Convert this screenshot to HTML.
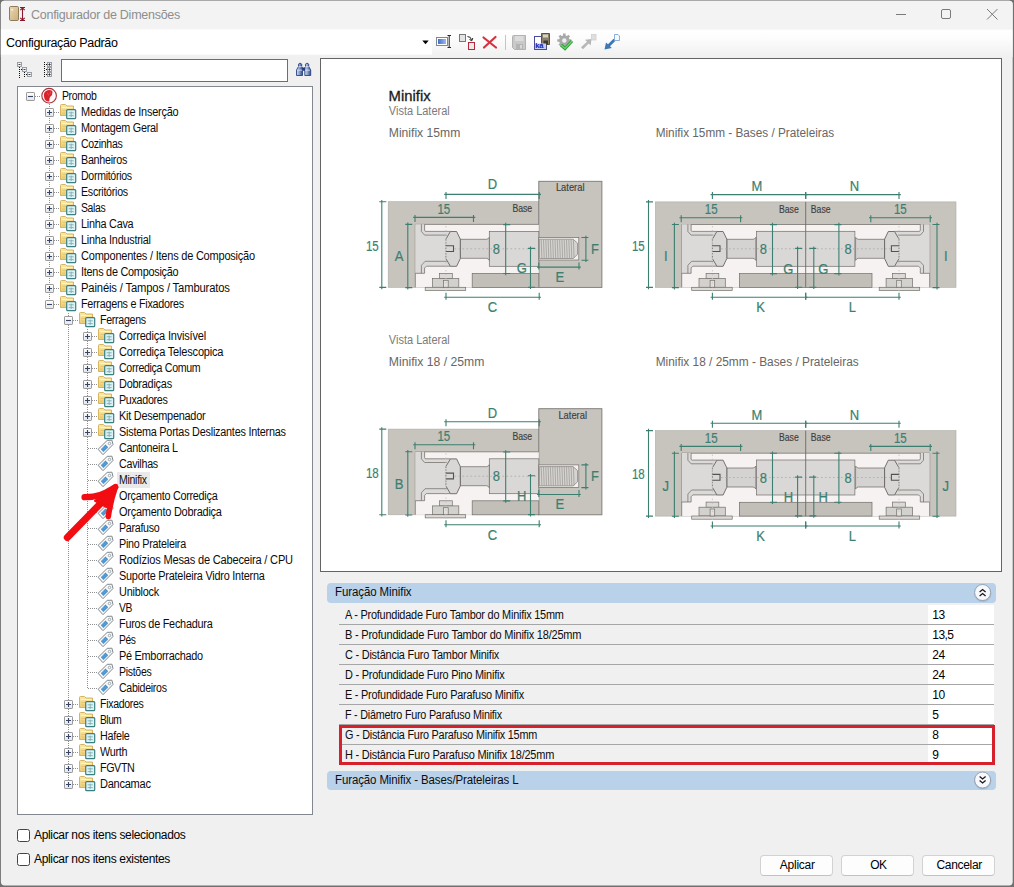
<!DOCTYPE html>
<html lang="pt-BR"><head><meta charset="utf-8"><title>Configurador de Dimensões</title>
<style>
html,body{margin:0;padding:0;}
body{width:1014px;height:887px;overflow:hidden;background:#707070;font-family:"Liberation Sans",sans-serif;position:relative;}
.t{position:absolute;white-space:nowrap;display:block;}
.a{position:absolute;display:block;}
svg{position:absolute;left:0;top:0;overflow:visible;}
svg text{font-family:"Liberation Sans",sans-serif;}
</style></head><body>
<svg width="1014" height="887" viewBox="0 0 1014 887">
<defs><clipPath id="wc"><rect x="0.900" y="0.800" width="1011.800" height="884.600" rx="3.600"/></clipPath>
<linearGradient id="tbg" x1="0" y1="0" x2="0" y2="1"><stop offset="0" stop-color="#ffffff"/><stop offset="0.350" stop-color="#fcfcfc"/><stop offset="1" stop-color="#f0f0f0"/></linearGradient></defs>
<g clip-path="url(#wc)">
<rect x="0" y="0" width="1014" height="887" fill="#f0f0f0"/>
<rect x="0" y="0" width="1014" height="29.600" fill="#f3f3f3"/>
<rect x="0" y="29.600" width="1014" height="27.400" fill="url(#tbg)"/>
<rect x="0" y="29.600" width="432" height="25" fill="#ffffff"/>
</g></svg>
<svg width="1014" height="60" viewBox="0 0 1014 60">
<defs><linearGradient id="door" x1="0" y1="0" x2="1" y2="1"><stop offset="0" stop-color="#ecd9b4"/><stop offset="1" stop-color="#c9ad7e"/></linearGradient></defs>
<rect x="9.5" y="6.5" width="9" height="14" rx="1.2" fill="url(#door)" stroke="#8f7a57" stroke-width="1"/>
<rect x="11.5" y="9" width="1.5" height="1.5" fill="#fff6e0"/>
<g stroke="#8b1a2c" stroke-width="1.1" fill="none"><path d="M20 7.5H25M20 20.5H25M22.5 8V20"/><path d="M20.3 10.2L22.5 8L24.7 10.2M20.3 17.8L22.5 20L24.7 17.8"/></g>
<g stroke="#7a7a7a" stroke-width="1" fill="none">
<path d="M896 14.5H906"/>
<rect x="941.5" y="9.5" width="9" height="9" rx="1.5"/>
<path d="M987 9L997.5 19.5M997.5 9L987 19.5"/>
</g>
</svg>
<span class="t" style="left:31.0px;top:7.0px;line-height:16px;font-size:12.5px;color:#8e8e8e;letter-spacing:-0.266px;">Configurador de Dimensões</span>
<span class="t" style="left:6.0px;top:35.4px;line-height:16px;font-size:12.5px;color:#000;letter-spacing:-0.349px;">Configuração Padrão</span>
<svg width="1014" height="60" viewBox="0 0 1014 60">
<defs>
<linearGradient id="bl" x1="0" y1="0" x2="1" y2="0"><stop offset="0" stop-color="#3f6fd0"/><stop offset="1" stop-color="#9db8ea"/></linearGradient>
</defs>
<path d="M422.3 40.5H428.7L425.5 44.2Z" fill="#000"/>
<!-- rename -->
<rect x="436.5" y="37.5" width="11" height="8" fill="#fff" stroke="#7d8894" stroke-width="1"/>
<rect x="438" y="39" width="8" height="5" fill="url(#bl)"/>
<path d="M447.5 35.5H449.2M451 35.5H449.2V47.5H447.5M449.2 47.5H451" stroke="#222" stroke-width="1" fill="none"/>
<!-- copy/move -->
<rect x="459.5" y="34.5" width="6" height="7" fill="#e4e4e4" stroke="#777" stroke-width="1"/>
<rect x="468.5" y="42.5" width="6" height="7" fill="#f1e6e8" stroke="#b02a3c" stroke-width="1"/>
<path d="M467.5 36.5Q471 36.5 471.5 40M469.5 39.5L471.8 40.8L472.8 38" stroke="#222" stroke-width="1" fill="none"/>
<!-- delete -->
<path d="M483.5 37.5L496 47.5M495.5 37L484 47.5" stroke="#d8303c" stroke-width="2.2" stroke-linecap="round" fill="none"/>
<!-- separator -->
<path d="M505.5 35V50" stroke="#c4c4c4" stroke-width="1"/>
<!-- save (disabled) -->
<path d="M512.5 36.5Q512.5 35.5 513.5 35.5H525.5V49.5H514.5L512.5 47.5Z" fill="#c9c9c9" stroke="#b2b2b2" stroke-width="1"/>
<rect x="515" y="36" width="8.5" height="5" fill="#dcdcdc"/>
<rect x="516" y="44" width="7" height="5" fill="#b4b4b4"/><rect x="520" y="45" width="2" height="3.5" fill="#d8d8d8"/>
<!-- save as -->
<rect x="534.5" y="36.500" width="12" height="13" fill="#fff" stroke="#4a4a9a" stroke-width="1"/>
<path d="M541.5 33.500H549.5V44.5H541.5Z" fill="#8c826a" stroke="#5b543f" stroke-width="1"/>
<rect x="543" y="34.500" width="5" height="3" fill="#d6d2c4"/><rect x="543.5" y="40.5" width="4.5" height="4" fill="#3c3a34"/>
<rect x="535" y="43.500" width="11" height="5.500" fill="#c9cdf0"/>
<!-- gear + check -->
<circle cx="564.3" cy="40.5" r="5.2" fill="#a9a9a9"/>
<g stroke="#a9a9a9" stroke-width="2.6"><path d="M564.3 33.5V47.5M557.3 40.5H571.3M559.400 35.600L569.200 45.400M569.200 35.600L559.400 45.400"/></g>
<circle cx="564.3" cy="40.5" r="2.2" fill="#efefef"/>
<path d="M561 45L565 48.500L572 41" stroke="#2f9e3b" stroke-width="3.2" fill="none" stroke-linejoin="miter"/>
<path d="M561 45L565 48.500L572 41" stroke="#6fd66f" stroke-width="1.2" fill="none"/>
<!-- gray arrow -->
<path d="M591.500 39L585 39.800L587 41.800L581 47.300L583 49.300L588.700 43.600L590.700 45.600Z" fill="#b7b7b7"/>
<rect x="591.5" y="34.500" width="4.5" height="5.500" fill="#dedede" stroke="#cfcfcf" stroke-width="0.8"/>
<!-- blue arrow -->
<path d="M604.5 49.500L606 42.500L608 44.300L613.5 38.800L615.500 40.800L610 46.300L611.8 48Z" fill="#3c78b4"/>
<path d="M614.5 34.500H618L619.500 36V40.500H614.5Z" fill="#f4f8ff" stroke="#7fa6d8" stroke-width="0.9"/>
</svg>
<span class="t" style="left:535.3px;top:42.0px;line-height:8px;font-size:7.5px;color:#1a1aa0;font-weight:bold;letter-spacing:-0.2px;">ka</span>
<div class="a" style="left:61px;top:59px;width:225px;height:21px;background:#fff;border:1px solid #6e6e6e;"></div>
<svg width="330" height="90" viewBox="0 0 330 90">
<g fill="none" stroke="#111" stroke-width="1" stroke-dasharray="1 1"><path d="M19.500 67V78M24.500 72V77M21 69.500H22M26 74.500H27M44.500 62V77M46 64.500H47M46 69.500H47M46 74.500H47"/></g>
<g fill="#f4f4f4" stroke="#8f979f" stroke-width="0.900">
<rect x="17.500" y="62.500" width="4" height="4"/><rect x="22.500" y="67.500" width="4" height="4"/><rect x="27.500" y="72.500" width="4" height="4"/>
<rect x="47.500" y="62.500" width="4" height="4"/><rect x="47.500" y="67.500" width="4" height="4"/><rect x="47.500" y="72.500" width="4" height="4"/></g>
<g stroke="#333" stroke-width="0.900" fill="none"><path d="M18.500 64.500H20.500M23.500 69.500H25.500M28.500 74.500H30.500M48.300 64.500H50.700M49.500 63.300V65.700M48.300 69.500H50.700M49.500 68.300V70.700M48.300 74.500H50.700M49.500 73.300V75.700"/></g>
<!-- binoculars -->
<defs><linearGradient id="bn" x1="0" y1="0" x2="1" y2="0"><stop offset="0" stop-color="#d3dcf0"/><stop offset="0.450" stop-color="#8da3d2"/><stop offset="1" stop-color="#2a478a"/></linearGradient></defs>
<g stroke="#2a447f" stroke-width="0.900" fill="url(#bn)">
<path d="M296.500 75.500V70L298.500 66.500V64.200L299.200 63.400H301L301.700 64.200V66.500L302.500 68V75.500Z"/>
<path d="M304.800 75.500V68L305.500 66.500V64.200L306.200 63.400H308L308.700 64.200V66.500L310.700 70V75.500Z"/>
</g>
<rect x="302.300" y="67.500" width="2.700" height="3.300" fill="#233c78"/>
<path d="M298.500 66.700H301.700M305.500 66.700H308.700M297.300 70.200H302.300M305 70.200H310" stroke="#e6ecf8" stroke-width="0.800" fill="none"/>
</svg>
<div class="a" style="left:17px;top:829.0px;width:11px;height:11px;background:#fff;border:1px solid #444;border-radius:2.5px;"></div>
<div class="a" style="left:17px;top:853.0px;width:11px;height:11px;background:#fff;border:1px solid #444;border-radius:2.5px;"></div>
<span class="t" style="left:34.0px;top:827.0px;line-height:16px;font-size:12px;color:#000;letter-spacing:-0.331px;">Aplicar nos itens selecionados</span>
<span class="t" style="left:34.0px;top:851.0px;line-height:16px;font-size:12px;color:#000;letter-spacing:-0.336px;">Aplicar nos itens existentes</span>
<div class="a" style="left:760px;top:855px;width:71px;height:19px;background:#fdfdfd;border:1px solid #d2d2d2;border-bottom-color:#c2c2c2;border-radius:4px;"></div>
<span class="t" style="left:779.8px;top:857.0px;line-height:16px;font-size:12px;color:#000;letter-spacing:-0.240px;">Aplicar</span>
<div class="a" style="left:841px;top:855px;width:71px;height:19px;background:#fdfdfd;border:1px solid #d2d2d2;border-bottom-color:#c2c2c2;border-radius:4px;"></div>
<span class="t" style="left:870.3px;top:857.0px;line-height:16px;font-size:12px;color:#000;letter-spacing:-0.669px;">OK</span>
<div class="a" style="left:922px;top:855px;width:71px;height:19px;background:#fdfdfd;border:1px solid #d2d2d2;border-bottom-color:#c2c2c2;border-radius:4px;"></div>
<span class="t" style="left:936.5px;top:857.0px;line-height:16px;font-size:12px;color:#000;letter-spacing:-0.316px;">Cancelar</span>
<div class="a" style="left:17px;top:86px;width:294px;height:727px;background:#fff;border:1px solid #828790;"></div>
<svg width="330" height="830" viewBox="0 0 330 830">
<defs>
<linearGradient id="fg" x1="0" y1="0" x2="0" y2="1"><stop offset="0" stop-color="#f8e8ab"/><stop offset="1" stop-color="#ebcd78"/></linearGradient>
<linearGradient id="xg" x1="0" y1="0" x2="0" y2="1"><stop offset="0" stop-color="#ffffff"/><stop offset="1" stop-color="#e6e6e6"/></linearGradient>




</defs>
<path d="M49.500 104V304M68.500 313V785M87.500 329V689" stroke="#8f8f8f" stroke-width="1" stroke-dasharray="1 1" fill="none"/>
<path d="M35 96.5H41" stroke="#8f8f8f" stroke-width="1" stroke-dasharray="1 1" fill="none"/>
<g transform="translate(26 92)"><rect x="0.500" y="0.500" width="8" height="8" rx="0.600" fill="url(#xg)" stroke="#9a9a9a" stroke-width="1"/><path d="M2 4.500H7" stroke="#36466a" stroke-width="1.100"/></g>
<circle cx="49.1" cy="95.7" r="7.3" fill="#fff6f6" stroke="#a8323c" stroke-width="1.1"/>
<path transform="translate(0.0 0.0)" d="M44 96.500Q43.200 91.500 47.500 90.200Q50 89.500 52 90.800Q53 92 52.200 93.500Q52.600 95.500 50.200 96.800Q49.200 98.500 49.300 101.300Q46.500 101.800 44.800 99.500Q44.200 98 44 96.500Z" fill="#d6242e"/>
<path transform="translate(0.0 0.0)" d="M47.500 92.500L48.500 95.500M50.500 91.500L50 94.500" stroke="#ee5560" stroke-width="0.700" fill="none"/>
<path d="M54 112.5H60" stroke="#8f8f8f" stroke-width="1" stroke-dasharray="1 1" fill="none"/>
<g transform="translate(45 108)"><rect x="0.500" y="0.500" width="8" height="8" rx="0.600" fill="url(#xg)" stroke="#9a9a9a" stroke-width="1"/><path d="M2 4.500H7M4.500 2V7" stroke="#36466a" stroke-width="1.100"/></g>
<g transform="translate(60 102)"><path d="M0.500 3.500Q0.500 2.500 1.500 2.500H5.500L7 4H13.500V13.500H0.500Z" fill="url(#fg)" stroke="#d3ae52" stroke-width="0.900"/><path d="M1.500 5.500H12.500" stroke="#fdf3cc" stroke-width="1"/><path d="M2.500 8.500H6M2.500 11H5" stroke="#e2c066" stroke-width="0.800"/><rect x="6.700" y="7.600" width="9" height="9" rx="0.900" fill="#dcf2f6" stroke="#3b7f7e" stroke-width="1.200"/><path d="M8.700 10.800H13.700M8.700 13.600H13.700M11.200 9.600V15" stroke="#7fb0b6" stroke-width="0.900" fill="none"/></g>
<path d="M54 128.5H60" stroke="#8f8f8f" stroke-width="1" stroke-dasharray="1 1" fill="none"/>
<g transform="translate(45 124)"><rect x="0.500" y="0.500" width="8" height="8" rx="0.600" fill="url(#xg)" stroke="#9a9a9a" stroke-width="1"/><path d="M2 4.500H7M4.500 2V7" stroke="#36466a" stroke-width="1.100"/></g>
<g transform="translate(60 118)"><path d="M0.500 3.500Q0.500 2.500 1.500 2.500H5.500L7 4H13.500V13.500H0.500Z" fill="url(#fg)" stroke="#d3ae52" stroke-width="0.900"/><path d="M1.500 5.500H12.500" stroke="#fdf3cc" stroke-width="1"/><path d="M2.500 8.500H6M2.500 11H5" stroke="#e2c066" stroke-width="0.800"/><rect x="6.700" y="7.600" width="9" height="9" rx="0.900" fill="#dcf2f6" stroke="#3b7f7e" stroke-width="1.200"/><path d="M8.700 10.800H13.700M8.700 13.600H13.700M11.200 9.600V15" stroke="#7fb0b6" stroke-width="0.900" fill="none"/></g>
<path d="M54 144.5H60" stroke="#8f8f8f" stroke-width="1" stroke-dasharray="1 1" fill="none"/>
<g transform="translate(45 140)"><rect x="0.500" y="0.500" width="8" height="8" rx="0.600" fill="url(#xg)" stroke="#9a9a9a" stroke-width="1"/><path d="M2 4.500H7M4.500 2V7" stroke="#36466a" stroke-width="1.100"/></g>
<g transform="translate(60 134)"><path d="M0.500 3.500Q0.500 2.500 1.500 2.500H5.500L7 4H13.500V13.500H0.500Z" fill="url(#fg)" stroke="#d3ae52" stroke-width="0.900"/><path d="M1.500 5.500H12.500" stroke="#fdf3cc" stroke-width="1"/><path d="M2.500 8.500H6M2.500 11H5" stroke="#e2c066" stroke-width="0.800"/><rect x="6.700" y="7.600" width="9" height="9" rx="0.900" fill="#dcf2f6" stroke="#3b7f7e" stroke-width="1.200"/><path d="M8.700 10.800H13.700M8.700 13.600H13.700M11.200 9.600V15" stroke="#7fb0b6" stroke-width="0.900" fill="none"/></g>
<path d="M54 160.5H60" stroke="#8f8f8f" stroke-width="1" stroke-dasharray="1 1" fill="none"/>
<g transform="translate(45 156)"><rect x="0.500" y="0.500" width="8" height="8" rx="0.600" fill="url(#xg)" stroke="#9a9a9a" stroke-width="1"/><path d="M2 4.500H7M4.500 2V7" stroke="#36466a" stroke-width="1.100"/></g>
<g transform="translate(60 150)"><path d="M0.500 3.500Q0.500 2.500 1.500 2.500H5.500L7 4H13.500V13.500H0.500Z" fill="url(#fg)" stroke="#d3ae52" stroke-width="0.900"/><path d="M1.500 5.500H12.500" stroke="#fdf3cc" stroke-width="1"/><path d="M2.500 8.500H6M2.500 11H5" stroke="#e2c066" stroke-width="0.800"/><rect x="6.700" y="7.600" width="9" height="9" rx="0.900" fill="#dcf2f6" stroke="#3b7f7e" stroke-width="1.200"/><path d="M8.700 10.800H13.700M8.700 13.600H13.700M11.200 9.600V15" stroke="#7fb0b6" stroke-width="0.900" fill="none"/></g>
<path d="M54 176.5H60" stroke="#8f8f8f" stroke-width="1" stroke-dasharray="1 1" fill="none"/>
<g transform="translate(45 172)"><rect x="0.500" y="0.500" width="8" height="8" rx="0.600" fill="url(#xg)" stroke="#9a9a9a" stroke-width="1"/><path d="M2 4.500H7M4.500 2V7" stroke="#36466a" stroke-width="1.100"/></g>
<g transform="translate(60 166)"><path d="M0.500 3.500Q0.500 2.500 1.500 2.500H5.500L7 4H13.500V13.500H0.500Z" fill="url(#fg)" stroke="#d3ae52" stroke-width="0.900"/><path d="M1.500 5.500H12.500" stroke="#fdf3cc" stroke-width="1"/><path d="M2.500 8.500H6M2.500 11H5" stroke="#e2c066" stroke-width="0.800"/><rect x="6.700" y="7.600" width="9" height="9" rx="0.900" fill="#dcf2f6" stroke="#3b7f7e" stroke-width="1.200"/><path d="M8.700 10.800H13.700M8.700 13.600H13.700M11.200 9.600V15" stroke="#7fb0b6" stroke-width="0.900" fill="none"/></g>
<path d="M54 192.5H60" stroke="#8f8f8f" stroke-width="1" stroke-dasharray="1 1" fill="none"/>
<g transform="translate(45 188)"><rect x="0.500" y="0.500" width="8" height="8" rx="0.600" fill="url(#xg)" stroke="#9a9a9a" stroke-width="1"/><path d="M2 4.500H7M4.500 2V7" stroke="#36466a" stroke-width="1.100"/></g>
<g transform="translate(60 182)"><path d="M0.500 3.500Q0.500 2.500 1.500 2.500H5.500L7 4H13.500V13.500H0.500Z" fill="url(#fg)" stroke="#d3ae52" stroke-width="0.900"/><path d="M1.500 5.500H12.500" stroke="#fdf3cc" stroke-width="1"/><path d="M2.500 8.500H6M2.500 11H5" stroke="#e2c066" stroke-width="0.800"/><rect x="6.700" y="7.600" width="9" height="9" rx="0.900" fill="#dcf2f6" stroke="#3b7f7e" stroke-width="1.200"/><path d="M8.700 10.800H13.700M8.700 13.600H13.700M11.200 9.600V15" stroke="#7fb0b6" stroke-width="0.900" fill="none"/></g>
<path d="M54 208.5H60" stroke="#8f8f8f" stroke-width="1" stroke-dasharray="1 1" fill="none"/>
<g transform="translate(45 204)"><rect x="0.500" y="0.500" width="8" height="8" rx="0.600" fill="url(#xg)" stroke="#9a9a9a" stroke-width="1"/><path d="M2 4.500H7M4.500 2V7" stroke="#36466a" stroke-width="1.100"/></g>
<g transform="translate(60 198)"><path d="M0.500 3.500Q0.500 2.500 1.500 2.500H5.500L7 4H13.500V13.500H0.500Z" fill="url(#fg)" stroke="#d3ae52" stroke-width="0.900"/><path d="M1.500 5.500H12.500" stroke="#fdf3cc" stroke-width="1"/><path d="M2.500 8.500H6M2.500 11H5" stroke="#e2c066" stroke-width="0.800"/><rect x="6.700" y="7.600" width="9" height="9" rx="0.900" fill="#dcf2f6" stroke="#3b7f7e" stroke-width="1.200"/><path d="M8.700 10.800H13.700M8.700 13.600H13.700M11.200 9.600V15" stroke="#7fb0b6" stroke-width="0.900" fill="none"/></g>
<path d="M54 224.5H60" stroke="#8f8f8f" stroke-width="1" stroke-dasharray="1 1" fill="none"/>
<g transform="translate(45 220)"><rect x="0.500" y="0.500" width="8" height="8" rx="0.600" fill="url(#xg)" stroke="#9a9a9a" stroke-width="1"/><path d="M2 4.500H7M4.500 2V7" stroke="#36466a" stroke-width="1.100"/></g>
<g transform="translate(60 214)"><path d="M0.500 3.500Q0.500 2.500 1.500 2.500H5.500L7 4H13.500V13.500H0.500Z" fill="url(#fg)" stroke="#d3ae52" stroke-width="0.900"/><path d="M1.500 5.500H12.500" stroke="#fdf3cc" stroke-width="1"/><path d="M2.500 8.500H6M2.500 11H5" stroke="#e2c066" stroke-width="0.800"/><rect x="6.700" y="7.600" width="9" height="9" rx="0.900" fill="#dcf2f6" stroke="#3b7f7e" stroke-width="1.200"/><path d="M8.700 10.800H13.700M8.700 13.600H13.700M11.200 9.600V15" stroke="#7fb0b6" stroke-width="0.900" fill="none"/></g>
<path d="M54 240.5H60" stroke="#8f8f8f" stroke-width="1" stroke-dasharray="1 1" fill="none"/>
<g transform="translate(45 236)"><rect x="0.500" y="0.500" width="8" height="8" rx="0.600" fill="url(#xg)" stroke="#9a9a9a" stroke-width="1"/><path d="M2 4.500H7M4.500 2V7" stroke="#36466a" stroke-width="1.100"/></g>
<g transform="translate(60 230)"><path d="M0.500 3.500Q0.500 2.500 1.500 2.500H5.500L7 4H13.500V13.500H0.500Z" fill="url(#fg)" stroke="#d3ae52" stroke-width="0.900"/><path d="M1.500 5.500H12.500" stroke="#fdf3cc" stroke-width="1"/><path d="M2.500 8.500H6M2.500 11H5" stroke="#e2c066" stroke-width="0.800"/><rect x="6.700" y="7.600" width="9" height="9" rx="0.900" fill="#dcf2f6" stroke="#3b7f7e" stroke-width="1.200"/><path d="M8.700 10.800H13.700M8.700 13.600H13.700M11.200 9.600V15" stroke="#7fb0b6" stroke-width="0.900" fill="none"/></g>
<path d="M54 256.5H60" stroke="#8f8f8f" stroke-width="1" stroke-dasharray="1 1" fill="none"/>
<g transform="translate(45 252)"><rect x="0.500" y="0.500" width="8" height="8" rx="0.600" fill="url(#xg)" stroke="#9a9a9a" stroke-width="1"/><path d="M2 4.500H7M4.500 2V7" stroke="#36466a" stroke-width="1.100"/></g>
<g transform="translate(60 246)"><path d="M0.500 3.500Q0.500 2.500 1.500 2.500H5.500L7 4H13.500V13.500H0.500Z" fill="url(#fg)" stroke="#d3ae52" stroke-width="0.900"/><path d="M1.500 5.500H12.500" stroke="#fdf3cc" stroke-width="1"/><path d="M2.500 8.500H6M2.500 11H5" stroke="#e2c066" stroke-width="0.800"/><rect x="6.700" y="7.600" width="9" height="9" rx="0.900" fill="#dcf2f6" stroke="#3b7f7e" stroke-width="1.200"/><path d="M8.700 10.800H13.700M8.700 13.600H13.700M11.200 9.600V15" stroke="#7fb0b6" stroke-width="0.900" fill="none"/></g>
<path d="M54 272.5H60" stroke="#8f8f8f" stroke-width="1" stroke-dasharray="1 1" fill="none"/>
<g transform="translate(45 268)"><rect x="0.500" y="0.500" width="8" height="8" rx="0.600" fill="url(#xg)" stroke="#9a9a9a" stroke-width="1"/><path d="M2 4.500H7M4.500 2V7" stroke="#36466a" stroke-width="1.100"/></g>
<g transform="translate(60 262)"><path d="M0.500 3.500Q0.500 2.500 1.500 2.500H5.500L7 4H13.500V13.500H0.500Z" fill="url(#fg)" stroke="#d3ae52" stroke-width="0.900"/><path d="M1.500 5.500H12.500" stroke="#fdf3cc" stroke-width="1"/><path d="M2.500 8.500H6M2.500 11H5" stroke="#e2c066" stroke-width="0.800"/><rect x="6.700" y="7.600" width="9" height="9" rx="0.900" fill="#dcf2f6" stroke="#3b7f7e" stroke-width="1.200"/><path d="M8.700 10.800H13.700M8.700 13.600H13.700M11.200 9.600V15" stroke="#7fb0b6" stroke-width="0.900" fill="none"/></g>
<path d="M54 288.5H60" stroke="#8f8f8f" stroke-width="1" stroke-dasharray="1 1" fill="none"/>
<g transform="translate(45 284)"><rect x="0.500" y="0.500" width="8" height="8" rx="0.600" fill="url(#xg)" stroke="#9a9a9a" stroke-width="1"/><path d="M2 4.500H7M4.500 2V7" stroke="#36466a" stroke-width="1.100"/></g>
<g transform="translate(60 278)"><path d="M0.500 3.500Q0.500 2.500 1.500 2.500H5.500L7 4H13.500V13.500H0.500Z" fill="url(#fg)" stroke="#d3ae52" stroke-width="0.900"/><path d="M1.500 5.500H12.500" stroke="#fdf3cc" stroke-width="1"/><path d="M2.500 8.500H6M2.500 11H5" stroke="#e2c066" stroke-width="0.800"/><rect x="6.700" y="7.600" width="9" height="9" rx="0.900" fill="#dcf2f6" stroke="#3b7f7e" stroke-width="1.200"/><path d="M8.700 10.800H13.700M8.700 13.600H13.700M11.200 9.600V15" stroke="#7fb0b6" stroke-width="0.900" fill="none"/></g>
<path d="M54 304.5H60" stroke="#8f8f8f" stroke-width="1" stroke-dasharray="1 1" fill="none"/>
<g transform="translate(45 300)"><rect x="0.500" y="0.500" width="8" height="8" rx="0.600" fill="url(#xg)" stroke="#9a9a9a" stroke-width="1"/><path d="M2 4.500H7" stroke="#36466a" stroke-width="1.100"/></g>
<g transform="translate(60 294)"><path d="M0.500 3.500Q0.500 2.500 1.500 2.500H5.500L7 4H13.500V13.500H0.500Z" fill="url(#fg)" stroke="#d3ae52" stroke-width="0.900"/><path d="M1.500 5.500H12.500" stroke="#fdf3cc" stroke-width="1"/><path d="M2.500 8.500H6M2.500 11H5" stroke="#e2c066" stroke-width="0.800"/><rect x="6.700" y="7.600" width="9" height="9" rx="0.900" fill="#dcf2f6" stroke="#3b7f7e" stroke-width="1.200"/><path d="M8.700 10.800H13.700M8.700 13.600H13.700M11.200 9.600V15" stroke="#7fb0b6" stroke-width="0.900" fill="none"/></g>
<path d="M73 320.5H79" stroke="#8f8f8f" stroke-width="1" stroke-dasharray="1 1" fill="none"/>
<g transform="translate(64 316)"><rect x="0.500" y="0.500" width="8" height="8" rx="0.600" fill="url(#xg)" stroke="#9a9a9a" stroke-width="1"/><path d="M2 4.500H7" stroke="#36466a" stroke-width="1.100"/></g>
<g transform="translate(79 310)"><path d="M0.500 3.500Q0.500 2.500 1.500 2.500H5.500L7 4H13.500V13.500H0.500Z" fill="url(#fg)" stroke="#d3ae52" stroke-width="0.900"/><path d="M1.500 5.500H12.500" stroke="#fdf3cc" stroke-width="1"/><path d="M2.500 8.500H6M2.500 11H5" stroke="#e2c066" stroke-width="0.800"/><rect x="6.700" y="7.600" width="9" height="9" rx="0.900" fill="#dcf2f6" stroke="#3b7f7e" stroke-width="1.200"/><path d="M8.700 10.800H13.700M8.700 13.600H13.700M11.200 9.600V15" stroke="#7fb0b6" stroke-width="0.900" fill="none"/></g>
<path d="M92 336.5H98" stroke="#8f8f8f" stroke-width="1" stroke-dasharray="1 1" fill="none"/>
<g transform="translate(83 332)"><rect x="0.500" y="0.500" width="8" height="8" rx="0.600" fill="url(#xg)" stroke="#9a9a9a" stroke-width="1"/><path d="M2 4.500H7M4.500 2V7" stroke="#36466a" stroke-width="1.100"/></g>
<g transform="translate(98 326)"><path d="M0.500 3.500Q0.500 2.500 1.500 2.500H5.500L7 4H13.500V13.500H0.500Z" fill="url(#fg)" stroke="#d3ae52" stroke-width="0.900"/><path d="M1.500 5.500H12.500" stroke="#fdf3cc" stroke-width="1"/><path d="M2.500 8.500H6M2.500 11H5" stroke="#e2c066" stroke-width="0.800"/><rect x="6.700" y="7.600" width="9" height="9" rx="0.900" fill="#dcf2f6" stroke="#3b7f7e" stroke-width="1.200"/><path d="M8.700 10.800H13.700M8.700 13.600H13.700M11.200 9.600V15" stroke="#7fb0b6" stroke-width="0.900" fill="none"/></g>
<path d="M92 352.5H98" stroke="#8f8f8f" stroke-width="1" stroke-dasharray="1 1" fill="none"/>
<g transform="translate(83 348)"><rect x="0.500" y="0.500" width="8" height="8" rx="0.600" fill="url(#xg)" stroke="#9a9a9a" stroke-width="1"/><path d="M2 4.500H7M4.500 2V7" stroke="#36466a" stroke-width="1.100"/></g>
<g transform="translate(98 342)"><path d="M0.500 3.500Q0.500 2.500 1.500 2.500H5.500L7 4H13.500V13.500H0.500Z" fill="url(#fg)" stroke="#d3ae52" stroke-width="0.900"/><path d="M1.500 5.500H12.500" stroke="#fdf3cc" stroke-width="1"/><path d="M2.500 8.500H6M2.500 11H5" stroke="#e2c066" stroke-width="0.800"/><rect x="6.700" y="7.600" width="9" height="9" rx="0.900" fill="#dcf2f6" stroke="#3b7f7e" stroke-width="1.200"/><path d="M8.700 10.800H13.700M8.700 13.600H13.700M11.200 9.600V15" stroke="#7fb0b6" stroke-width="0.900" fill="none"/></g>
<path d="M92 368.5H98" stroke="#8f8f8f" stroke-width="1" stroke-dasharray="1 1" fill="none"/>
<g transform="translate(83 364)"><rect x="0.500" y="0.500" width="8" height="8" rx="0.600" fill="url(#xg)" stroke="#9a9a9a" stroke-width="1"/><path d="M2 4.500H7M4.500 2V7" stroke="#36466a" stroke-width="1.100"/></g>
<g transform="translate(98 358)"><path d="M0.500 3.500Q0.500 2.500 1.500 2.500H5.500L7 4H13.500V13.500H0.500Z" fill="url(#fg)" stroke="#d3ae52" stroke-width="0.900"/><path d="M1.500 5.500H12.500" stroke="#fdf3cc" stroke-width="1"/><path d="M2.500 8.500H6M2.500 11H5" stroke="#e2c066" stroke-width="0.800"/><rect x="6.700" y="7.600" width="9" height="9" rx="0.900" fill="#dcf2f6" stroke="#3b7f7e" stroke-width="1.200"/><path d="M8.700 10.800H13.700M8.700 13.600H13.700M11.200 9.600V15" stroke="#7fb0b6" stroke-width="0.900" fill="none"/></g>
<path d="M92 384.5H98" stroke="#8f8f8f" stroke-width="1" stroke-dasharray="1 1" fill="none"/>
<g transform="translate(83 380)"><rect x="0.500" y="0.500" width="8" height="8" rx="0.600" fill="url(#xg)" stroke="#9a9a9a" stroke-width="1"/><path d="M2 4.500H7M4.500 2V7" stroke="#36466a" stroke-width="1.100"/></g>
<g transform="translate(98 374)"><path d="M0.500 3.500Q0.500 2.500 1.500 2.500H5.500L7 4H13.500V13.500H0.500Z" fill="url(#fg)" stroke="#d3ae52" stroke-width="0.900"/><path d="M1.500 5.500H12.500" stroke="#fdf3cc" stroke-width="1"/><path d="M2.500 8.500H6M2.500 11H5" stroke="#e2c066" stroke-width="0.800"/><rect x="6.700" y="7.600" width="9" height="9" rx="0.900" fill="#dcf2f6" stroke="#3b7f7e" stroke-width="1.200"/><path d="M8.700 10.800H13.700M8.700 13.600H13.700M11.200 9.600V15" stroke="#7fb0b6" stroke-width="0.900" fill="none"/></g>
<path d="M92 400.5H98" stroke="#8f8f8f" stroke-width="1" stroke-dasharray="1 1" fill="none"/>
<g transform="translate(83 396)"><rect x="0.500" y="0.500" width="8" height="8" rx="0.600" fill="url(#xg)" stroke="#9a9a9a" stroke-width="1"/><path d="M2 4.500H7M4.500 2V7" stroke="#36466a" stroke-width="1.100"/></g>
<g transform="translate(98 390)"><path d="M0.500 3.500Q0.500 2.500 1.500 2.500H5.500L7 4H13.500V13.500H0.500Z" fill="url(#fg)" stroke="#d3ae52" stroke-width="0.900"/><path d="M1.500 5.500H12.500" stroke="#fdf3cc" stroke-width="1"/><path d="M2.500 8.500H6M2.500 11H5" stroke="#e2c066" stroke-width="0.800"/><rect x="6.700" y="7.600" width="9" height="9" rx="0.900" fill="#dcf2f6" stroke="#3b7f7e" stroke-width="1.200"/><path d="M8.700 10.800H13.700M8.700 13.600H13.700M11.200 9.600V15" stroke="#7fb0b6" stroke-width="0.900" fill="none"/></g>
<path d="M92 416.5H98" stroke="#8f8f8f" stroke-width="1" stroke-dasharray="1 1" fill="none"/>
<g transform="translate(83 412)"><rect x="0.500" y="0.500" width="8" height="8" rx="0.600" fill="url(#xg)" stroke="#9a9a9a" stroke-width="1"/><path d="M2 4.500H7M4.500 2V7" stroke="#36466a" stroke-width="1.100"/></g>
<g transform="translate(98 406)"><path d="M0.500 3.500Q0.500 2.500 1.500 2.500H5.500L7 4H13.500V13.500H0.500Z" fill="url(#fg)" stroke="#d3ae52" stroke-width="0.900"/><path d="M1.500 5.500H12.500" stroke="#fdf3cc" stroke-width="1"/><path d="M2.500 8.500H6M2.500 11H5" stroke="#e2c066" stroke-width="0.800"/><rect x="6.700" y="7.600" width="9" height="9" rx="0.900" fill="#dcf2f6" stroke="#3b7f7e" stroke-width="1.200"/><path d="M8.700 10.800H13.700M8.700 13.600H13.700M11.200 9.600V15" stroke="#7fb0b6" stroke-width="0.900" fill="none"/></g>
<path d="M92 432.5H98" stroke="#8f8f8f" stroke-width="1" stroke-dasharray="1 1" fill="none"/>
<g transform="translate(83 428)"><rect x="0.500" y="0.500" width="8" height="8" rx="0.600" fill="url(#xg)" stroke="#9a9a9a" stroke-width="1"/><path d="M2 4.500H7M4.500 2V7" stroke="#36466a" stroke-width="1.100"/></g>
<g transform="translate(98 422)"><path d="M0.500 3.500Q0.500 2.500 1.500 2.500H5.500L7 4H13.500V13.500H0.500Z" fill="url(#fg)" stroke="#d3ae52" stroke-width="0.900"/><path d="M1.500 5.500H12.500" stroke="#fdf3cc" stroke-width="1"/><path d="M2.500 8.500H6M2.500 11H5" stroke="#e2c066" stroke-width="0.800"/><rect x="6.700" y="7.600" width="9" height="9" rx="0.900" fill="#dcf2f6" stroke="#3b7f7e" stroke-width="1.200"/><path d="M8.700 10.800H13.700M8.700 13.600H13.700M11.200 9.600V15" stroke="#7fb0b6" stroke-width="0.900" fill="none"/></g>
<path d="M88 448.5H97" stroke="#8f8f8f" stroke-width="1" stroke-dasharray="1 1" fill="none"/>
<g transform="translate(105.5 448)"><path d="M-7.400 1.300L1.700 -7.600L6.400 -7.800L7.500 -3.500L-2.500 6.700Z" fill="#f6f8fa" stroke="#808890" stroke-width="1" stroke-linejoin="round"/><rect x="-3.300" y="-1.900" width="6.600" height="3.800" transform="translate(-1 0.300) rotate(-45)" fill="#4b91ca"/><path d="M-1.700 -1.900V1.900M0 -1.900V1.900M1.700 -1.900V1.900" transform="translate(-1 0.300) rotate(-45)" stroke="#7fb3dd" stroke-width="0.500"/><circle cx="4" cy="-4.500" r="1.250" fill="#fff" stroke="#8a9199" stroke-width="0.800"/></g>
<path d="M88 464.5H97" stroke="#8f8f8f" stroke-width="1" stroke-dasharray="1 1" fill="none"/>
<g transform="translate(105.5 464)"><path d="M-7.400 1.300L1.700 -7.600L6.400 -7.800L7.500 -3.500L-2.500 6.700Z" fill="#f6f8fa" stroke="#808890" stroke-width="1" stroke-linejoin="round"/><rect x="-3.300" y="-1.900" width="6.600" height="3.800" transform="translate(-1 0.300) rotate(-45)" fill="#4b91ca"/><path d="M-1.700 -1.900V1.900M0 -1.900V1.900M1.700 -1.900V1.900" transform="translate(-1 0.300) rotate(-45)" stroke="#7fb3dd" stroke-width="0.500"/><circle cx="4" cy="-4.500" r="1.250" fill="#fff" stroke="#8a9199" stroke-width="0.800"/></g>
<path d="M88 480.5H97" stroke="#8f8f8f" stroke-width="1" stroke-dasharray="1 1" fill="none"/>
<g transform="translate(105.5 480)"><path d="M-7.400 1.300L1.700 -7.600L6.400 -7.800L7.500 -3.500L-2.500 6.700Z" fill="#f6f8fa" stroke="#808890" stroke-width="1" stroke-linejoin="round"/><rect x="-3.300" y="-1.900" width="6.600" height="3.800" transform="translate(-1 0.300) rotate(-45)" fill="#4b91ca"/><path d="M-1.700 -1.900V1.900M0 -1.900V1.900M1.700 -1.900V1.900" transform="translate(-1 0.300) rotate(-45)" stroke="#7fb3dd" stroke-width="0.500"/><circle cx="4" cy="-4.500" r="1.250" fill="#fff" stroke="#8a9199" stroke-width="0.800"/></g>
<path d="M88 496.5H97" stroke="#8f8f8f" stroke-width="1" stroke-dasharray="1 1" fill="none"/>
<g transform="translate(105.5 496)"><path d="M-7.400 1.300L1.700 -7.600L6.400 -7.800L7.500 -3.500L-2.500 6.700Z" fill="#f6f8fa" stroke="#808890" stroke-width="1" stroke-linejoin="round"/><rect x="-3.300" y="-1.900" width="6.600" height="3.800" transform="translate(-1 0.300) rotate(-45)" fill="#4b91ca"/><path d="M-1.700 -1.900V1.900M0 -1.900V1.900M1.700 -1.900V1.900" transform="translate(-1 0.300) rotate(-45)" stroke="#7fb3dd" stroke-width="0.500"/><circle cx="4" cy="-4.500" r="1.250" fill="#fff" stroke="#8a9199" stroke-width="0.800"/></g>
<path d="M88 512.5H97" stroke="#8f8f8f" stroke-width="1" stroke-dasharray="1 1" fill="none"/>
<g transform="translate(105.5 512)"><path d="M-7.400 1.300L1.700 -7.600L6.400 -7.800L7.500 -3.500L-2.500 6.700Z" fill="#f6f8fa" stroke="#808890" stroke-width="1" stroke-linejoin="round"/><rect x="-3.300" y="-1.900" width="6.600" height="3.800" transform="translate(-1 0.300) rotate(-45)" fill="#4b91ca"/><path d="M-1.700 -1.900V1.900M0 -1.900V1.900M1.700 -1.900V1.900" transform="translate(-1 0.300) rotate(-45)" stroke="#7fb3dd" stroke-width="0.500"/><circle cx="4" cy="-4.500" r="1.250" fill="#fff" stroke="#8a9199" stroke-width="0.800"/></g>
<path d="M88 528.5H97" stroke="#8f8f8f" stroke-width="1" stroke-dasharray="1 1" fill="none"/>
<g transform="translate(105.5 528)"><path d="M-7.400 1.300L1.700 -7.600L6.400 -7.800L7.500 -3.500L-2.500 6.700Z" fill="#f6f8fa" stroke="#808890" stroke-width="1" stroke-linejoin="round"/><rect x="-3.300" y="-1.900" width="6.600" height="3.800" transform="translate(-1 0.300) rotate(-45)" fill="#4b91ca"/><path d="M-1.700 -1.900V1.900M0 -1.900V1.900M1.700 -1.900V1.900" transform="translate(-1 0.300) rotate(-45)" stroke="#7fb3dd" stroke-width="0.500"/><circle cx="4" cy="-4.500" r="1.250" fill="#fff" stroke="#8a9199" stroke-width="0.800"/></g>
<path d="M88 544.5H97" stroke="#8f8f8f" stroke-width="1" stroke-dasharray="1 1" fill="none"/>
<g transform="translate(105.5 544)"><path d="M-7.400 1.300L1.700 -7.600L6.400 -7.800L7.500 -3.500L-2.500 6.700Z" fill="#f6f8fa" stroke="#808890" stroke-width="1" stroke-linejoin="round"/><rect x="-3.300" y="-1.900" width="6.600" height="3.800" transform="translate(-1 0.300) rotate(-45)" fill="#4b91ca"/><path d="M-1.700 -1.900V1.900M0 -1.900V1.900M1.700 -1.900V1.900" transform="translate(-1 0.300) rotate(-45)" stroke="#7fb3dd" stroke-width="0.500"/><circle cx="4" cy="-4.500" r="1.250" fill="#fff" stroke="#8a9199" stroke-width="0.800"/></g>
<path d="M88 560.5H97" stroke="#8f8f8f" stroke-width="1" stroke-dasharray="1 1" fill="none"/>
<g transform="translate(105.5 560)"><path d="M-7.400 1.300L1.700 -7.600L6.400 -7.800L7.500 -3.500L-2.500 6.700Z" fill="#f6f8fa" stroke="#808890" stroke-width="1" stroke-linejoin="round"/><rect x="-3.300" y="-1.900" width="6.600" height="3.800" transform="translate(-1 0.300) rotate(-45)" fill="#4b91ca"/><path d="M-1.700 -1.900V1.900M0 -1.900V1.900M1.700 -1.900V1.900" transform="translate(-1 0.300) rotate(-45)" stroke="#7fb3dd" stroke-width="0.500"/><circle cx="4" cy="-4.500" r="1.250" fill="#fff" stroke="#8a9199" stroke-width="0.800"/></g>
<path d="M88 576.5H97" stroke="#8f8f8f" stroke-width="1" stroke-dasharray="1 1" fill="none"/>
<g transform="translate(105.5 576)"><path d="M-7.400 1.300L1.700 -7.600L6.400 -7.800L7.500 -3.500L-2.500 6.700Z" fill="#f6f8fa" stroke="#808890" stroke-width="1" stroke-linejoin="round"/><rect x="-3.300" y="-1.900" width="6.600" height="3.800" transform="translate(-1 0.300) rotate(-45)" fill="#4b91ca"/><path d="M-1.700 -1.900V1.900M0 -1.900V1.900M1.700 -1.900V1.900" transform="translate(-1 0.300) rotate(-45)" stroke="#7fb3dd" stroke-width="0.500"/><circle cx="4" cy="-4.500" r="1.250" fill="#fff" stroke="#8a9199" stroke-width="0.800"/></g>
<path d="M88 592.5H97" stroke="#8f8f8f" stroke-width="1" stroke-dasharray="1 1" fill="none"/>
<g transform="translate(105.5 592)"><path d="M-7.400 1.300L1.700 -7.600L6.400 -7.800L7.500 -3.500L-2.500 6.700Z" fill="#f6f8fa" stroke="#808890" stroke-width="1" stroke-linejoin="round"/><rect x="-3.300" y="-1.900" width="6.600" height="3.800" transform="translate(-1 0.300) rotate(-45)" fill="#4b91ca"/><path d="M-1.700 -1.900V1.900M0 -1.900V1.900M1.700 -1.900V1.900" transform="translate(-1 0.300) rotate(-45)" stroke="#7fb3dd" stroke-width="0.500"/><circle cx="4" cy="-4.500" r="1.250" fill="#fff" stroke="#8a9199" stroke-width="0.800"/></g>
<path d="M88 608.5H97" stroke="#8f8f8f" stroke-width="1" stroke-dasharray="1 1" fill="none"/>
<g transform="translate(105.5 608)"><path d="M-7.400 1.300L1.700 -7.600L6.400 -7.800L7.500 -3.500L-2.500 6.700Z" fill="#f6f8fa" stroke="#808890" stroke-width="1" stroke-linejoin="round"/><rect x="-3.300" y="-1.900" width="6.600" height="3.800" transform="translate(-1 0.300) rotate(-45)" fill="#4b91ca"/><path d="M-1.700 -1.900V1.900M0 -1.900V1.900M1.700 -1.900V1.900" transform="translate(-1 0.300) rotate(-45)" stroke="#7fb3dd" stroke-width="0.500"/><circle cx="4" cy="-4.500" r="1.250" fill="#fff" stroke="#8a9199" stroke-width="0.800"/></g>
<path d="M88 624.5H97" stroke="#8f8f8f" stroke-width="1" stroke-dasharray="1 1" fill="none"/>
<g transform="translate(105.5 624)"><path d="M-7.400 1.300L1.700 -7.600L6.400 -7.800L7.500 -3.500L-2.500 6.700Z" fill="#f6f8fa" stroke="#808890" stroke-width="1" stroke-linejoin="round"/><rect x="-3.300" y="-1.900" width="6.600" height="3.800" transform="translate(-1 0.300) rotate(-45)" fill="#4b91ca"/><path d="M-1.700 -1.900V1.900M0 -1.900V1.900M1.700 -1.900V1.900" transform="translate(-1 0.300) rotate(-45)" stroke="#7fb3dd" stroke-width="0.500"/><circle cx="4" cy="-4.500" r="1.250" fill="#fff" stroke="#8a9199" stroke-width="0.800"/></g>
<path d="M88 640.5H97" stroke="#8f8f8f" stroke-width="1" stroke-dasharray="1 1" fill="none"/>
<g transform="translate(105.5 640)"><path d="M-7.400 1.300L1.700 -7.600L6.400 -7.800L7.500 -3.500L-2.500 6.700Z" fill="#f6f8fa" stroke="#808890" stroke-width="1" stroke-linejoin="round"/><rect x="-3.300" y="-1.900" width="6.600" height="3.800" transform="translate(-1 0.300) rotate(-45)" fill="#4b91ca"/><path d="M-1.700 -1.900V1.900M0 -1.900V1.900M1.700 -1.900V1.900" transform="translate(-1 0.300) rotate(-45)" stroke="#7fb3dd" stroke-width="0.500"/><circle cx="4" cy="-4.500" r="1.250" fill="#fff" stroke="#8a9199" stroke-width="0.800"/></g>
<path d="M88 656.5H97" stroke="#8f8f8f" stroke-width="1" stroke-dasharray="1 1" fill="none"/>
<g transform="translate(105.5 656)"><path d="M-7.400 1.300L1.700 -7.600L6.400 -7.800L7.500 -3.500L-2.500 6.700Z" fill="#f6f8fa" stroke="#808890" stroke-width="1" stroke-linejoin="round"/><rect x="-3.300" y="-1.900" width="6.600" height="3.800" transform="translate(-1 0.300) rotate(-45)" fill="#4b91ca"/><path d="M-1.700 -1.900V1.900M0 -1.900V1.900M1.700 -1.900V1.900" transform="translate(-1 0.300) rotate(-45)" stroke="#7fb3dd" stroke-width="0.500"/><circle cx="4" cy="-4.500" r="1.250" fill="#fff" stroke="#8a9199" stroke-width="0.800"/></g>
<path d="M88 672.5H97" stroke="#8f8f8f" stroke-width="1" stroke-dasharray="1 1" fill="none"/>
<g transform="translate(105.5 672)"><path d="M-7.400 1.300L1.700 -7.600L6.400 -7.800L7.500 -3.500L-2.500 6.700Z" fill="#f6f8fa" stroke="#808890" stroke-width="1" stroke-linejoin="round"/><rect x="-3.300" y="-1.900" width="6.600" height="3.800" transform="translate(-1 0.300) rotate(-45)" fill="#4b91ca"/><path d="M-1.700 -1.900V1.900M0 -1.900V1.900M1.700 -1.900V1.900" transform="translate(-1 0.300) rotate(-45)" stroke="#7fb3dd" stroke-width="0.500"/><circle cx="4" cy="-4.500" r="1.250" fill="#fff" stroke="#8a9199" stroke-width="0.800"/></g>
<path d="M88 688.5H97" stroke="#8f8f8f" stroke-width="1" stroke-dasharray="1 1" fill="none"/>
<g transform="translate(105.5 688)"><path d="M-7.400 1.300L1.700 -7.600L6.400 -7.800L7.500 -3.500L-2.500 6.700Z" fill="#f6f8fa" stroke="#808890" stroke-width="1" stroke-linejoin="round"/><rect x="-3.300" y="-1.900" width="6.600" height="3.800" transform="translate(-1 0.300) rotate(-45)" fill="#4b91ca"/><path d="M-1.700 -1.900V1.900M0 -1.900V1.900M1.700 -1.900V1.900" transform="translate(-1 0.300) rotate(-45)" stroke="#7fb3dd" stroke-width="0.500"/><circle cx="4" cy="-4.500" r="1.250" fill="#fff" stroke="#8a9199" stroke-width="0.800"/></g>
<path d="M73 704.5H79" stroke="#8f8f8f" stroke-width="1" stroke-dasharray="1 1" fill="none"/>
<g transform="translate(64 700)"><rect x="0.500" y="0.500" width="8" height="8" rx="0.600" fill="url(#xg)" stroke="#9a9a9a" stroke-width="1"/><path d="M2 4.500H7M4.500 2V7" stroke="#36466a" stroke-width="1.100"/></g>
<g transform="translate(79 694)"><path d="M0.500 3.500Q0.500 2.500 1.500 2.500H5.500L7 4H13.500V13.500H0.500Z" fill="url(#fg)" stroke="#d3ae52" stroke-width="0.900"/><path d="M1.500 5.500H12.500" stroke="#fdf3cc" stroke-width="1"/><path d="M2.500 8.500H6M2.500 11H5" stroke="#e2c066" stroke-width="0.800"/><rect x="6.700" y="7.600" width="9" height="9" rx="0.900" fill="#dcf2f6" stroke="#3b7f7e" stroke-width="1.200"/><path d="M8.700 10.800H13.700M8.700 13.600H13.700M11.200 9.600V15" stroke="#7fb0b6" stroke-width="0.900" fill="none"/></g>
<path d="M73 720.5H79" stroke="#8f8f8f" stroke-width="1" stroke-dasharray="1 1" fill="none"/>
<g transform="translate(64 716)"><rect x="0.500" y="0.500" width="8" height="8" rx="0.600" fill="url(#xg)" stroke="#9a9a9a" stroke-width="1"/><path d="M2 4.500H7M4.500 2V7" stroke="#36466a" stroke-width="1.100"/></g>
<g transform="translate(79 710)"><path d="M0.500 3.500Q0.500 2.500 1.500 2.500H5.500L7 4H13.500V13.500H0.500Z" fill="url(#fg)" stroke="#d3ae52" stroke-width="0.900"/><path d="M1.500 5.500H12.500" stroke="#fdf3cc" stroke-width="1"/><path d="M2.500 8.500H6M2.500 11H5" stroke="#e2c066" stroke-width="0.800"/><rect x="6.700" y="7.600" width="9" height="9" rx="0.900" fill="#dcf2f6" stroke="#3b7f7e" stroke-width="1.200"/><path d="M8.700 10.800H13.700M8.700 13.600H13.700M11.200 9.600V15" stroke="#7fb0b6" stroke-width="0.900" fill="none"/></g>
<path d="M73 736.5H79" stroke="#8f8f8f" stroke-width="1" stroke-dasharray="1 1" fill="none"/>
<g transform="translate(64 732)"><rect x="0.500" y="0.500" width="8" height="8" rx="0.600" fill="url(#xg)" stroke="#9a9a9a" stroke-width="1"/><path d="M2 4.500H7M4.500 2V7" stroke="#36466a" stroke-width="1.100"/></g>
<g transform="translate(79 726)"><path d="M0.500 3.500Q0.500 2.500 1.500 2.500H5.500L7 4H13.500V13.500H0.500Z" fill="url(#fg)" stroke="#d3ae52" stroke-width="0.900"/><path d="M1.500 5.500H12.500" stroke="#fdf3cc" stroke-width="1"/><path d="M2.500 8.500H6M2.500 11H5" stroke="#e2c066" stroke-width="0.800"/><rect x="6.700" y="7.600" width="9" height="9" rx="0.900" fill="#dcf2f6" stroke="#3b7f7e" stroke-width="1.200"/><path d="M8.700 10.800H13.700M8.700 13.600H13.700M11.200 9.600V15" stroke="#7fb0b6" stroke-width="0.900" fill="none"/></g>
<path d="M73 752.5H79" stroke="#8f8f8f" stroke-width="1" stroke-dasharray="1 1" fill="none"/>
<g transform="translate(64 748)"><rect x="0.500" y="0.500" width="8" height="8" rx="0.600" fill="url(#xg)" stroke="#9a9a9a" stroke-width="1"/><path d="M2 4.500H7M4.500 2V7" stroke="#36466a" stroke-width="1.100"/></g>
<g transform="translate(79 742)"><path d="M0.500 3.500Q0.500 2.500 1.500 2.500H5.500L7 4H13.500V13.500H0.500Z" fill="url(#fg)" stroke="#d3ae52" stroke-width="0.900"/><path d="M1.500 5.500H12.500" stroke="#fdf3cc" stroke-width="1"/><path d="M2.500 8.500H6M2.500 11H5" stroke="#e2c066" stroke-width="0.800"/><rect x="6.700" y="7.600" width="9" height="9" rx="0.900" fill="#dcf2f6" stroke="#3b7f7e" stroke-width="1.200"/><path d="M8.700 10.800H13.700M8.700 13.600H13.700M11.200 9.600V15" stroke="#7fb0b6" stroke-width="0.900" fill="none"/></g>
<path d="M73 768.5H79" stroke="#8f8f8f" stroke-width="1" stroke-dasharray="1 1" fill="none"/>
<g transform="translate(64 764)"><rect x="0.500" y="0.500" width="8" height="8" rx="0.600" fill="url(#xg)" stroke="#9a9a9a" stroke-width="1"/><path d="M2 4.500H7M4.500 2V7" stroke="#36466a" stroke-width="1.100"/></g>
<g transform="translate(79 758)"><path d="M0.500 3.500Q0.500 2.500 1.500 2.500H5.500L7 4H13.500V13.500H0.500Z" fill="url(#fg)" stroke="#d3ae52" stroke-width="0.900"/><path d="M1.500 5.500H12.500" stroke="#fdf3cc" stroke-width="1"/><path d="M2.500 8.500H6M2.500 11H5" stroke="#e2c066" stroke-width="0.800"/><rect x="6.700" y="7.600" width="9" height="9" rx="0.900" fill="#dcf2f6" stroke="#3b7f7e" stroke-width="1.200"/><path d="M8.700 10.800H13.700M8.700 13.600H13.700M11.200 9.600V15" stroke="#7fb0b6" stroke-width="0.900" fill="none"/></g>
<path d="M73 784.5H79" stroke="#8f8f8f" stroke-width="1" stroke-dasharray="1 1" fill="none"/>
<g transform="translate(64 780)"><rect x="0.500" y="0.500" width="8" height="8" rx="0.600" fill="url(#xg)" stroke="#9a9a9a" stroke-width="1"/><path d="M2 4.500H7M4.500 2V7" stroke="#36466a" stroke-width="1.100"/></g>
<g transform="translate(79 774)"><path d="M0.500 3.500Q0.500 2.500 1.500 2.500H5.500L7 4H13.500V13.500H0.500Z" fill="url(#fg)" stroke="#d3ae52" stroke-width="0.900"/><path d="M1.500 5.500H12.500" stroke="#fdf3cc" stroke-width="1"/><path d="M2.500 8.500H6M2.500 11H5" stroke="#e2c066" stroke-width="0.800"/><rect x="6.700" y="7.600" width="9" height="9" rx="0.900" fill="#dcf2f6" stroke="#3b7f7e" stroke-width="1.200"/><path d="M8.700 10.800H13.700M8.700 13.600H13.700M11.200 9.600V15" stroke="#7fb0b6" stroke-width="0.900" fill="none"/></g>
</svg>
<div class="a" style="left:117px;top:472px;width:33px;height:16px;background:#e9e9e9;"></div>
<span class="t" style="left:62.3px;top:87.7px;line-height:16px;font-size:12px;color:#0c0c0c;letter-spacing:-0.436px;transform:scaleX(0.8731);transform-origin:0 50%;">Promob</span>
<span class="t" style="left:81.3px;top:103.7px;line-height:16px;font-size:12px;color:#0c0c0c;letter-spacing:-0.242px;transform:scaleX(0.9120);transform-origin:0 50%;">Medidas de Inserção</span>
<span class="t" style="left:81.3px;top:119.7px;line-height:16px;font-size:12px;color:#0c0c0c;letter-spacing:-0.296px;transform:scaleX(0.9023);transform-origin:0 50%;">Montagem Geral</span>
<span class="t" style="left:81.3px;top:135.7px;line-height:16px;font-size:12px;color:#0c0c0c;letter-spacing:-0.368px;transform:scaleX(0.8793);transform-origin:0 50%;">Cozinhas</span>
<span class="t" style="left:81.3px;top:151.7px;line-height:16px;font-size:12px;color:#0c0c0c;letter-spacing:-0.299px;transform:scaleX(0.8959);transform-origin:0 50%;">Banheiros</span>
<span class="t" style="left:81.3px;top:167.7px;line-height:16px;font-size:12px;color:#0c0c0c;letter-spacing:-0.327px;transform:scaleX(0.8797);transform-origin:0 50%;">Dormitórios</span>
<span class="t" style="left:81.3px;top:183.7px;line-height:16px;font-size:12px;color:#0c0c0c;letter-spacing:-0.280px;transform:scaleX(0.8861);transform-origin:0 50%;">Escritórios</span>
<span class="t" style="left:81.3px;top:199.7px;line-height:16px;font-size:12px;color:#0c0c0c;letter-spacing:-0.388px;transform:scaleX(0.8690);transform-origin:0 50%;">Salas</span>
<span class="t" style="left:81.3px;top:215.7px;line-height:16px;font-size:12px;color:#0c0c0c;letter-spacing:-0.276px;transform:scaleX(0.9042);transform-origin:0 50%;">Linha Cava</span>
<span class="t" style="left:81.3px;top:231.7px;line-height:16px;font-size:12px;color:#0c0c0c;letter-spacing:-0.244px;transform:scaleX(0.8995);transform-origin:0 50%;">Linha Industrial</span>
<span class="t" style="left:81.3px;top:247.7px;line-height:16px;font-size:12px;color:#0c0c0c;letter-spacing:-0.234px;transform:scaleX(0.9165);transform-origin:0 50%;">Componentes / Itens de Composição</span>
<span class="t" style="left:81.3px;top:263.7px;line-height:16px;font-size:12px;color:#0c0c0c;letter-spacing:-0.268px;transform:scaleX(0.9048);transform-origin:0 50%;">Itens de Composição</span>
<span class="t" style="left:81.3px;top:279.7px;line-height:16px;font-size:12px;color:#0c0c0c;letter-spacing:-0.164px;transform:scaleX(0.9365);transform-origin:0 50%;">Painéis / Tampos / Tamburatos</span>
<span class="t" style="left:81.3px;top:295.7px;line-height:16px;font-size:12px;color:#0c0c0c;letter-spacing:-0.284px;transform:scaleX(0.8966);transform-origin:0 50%;">Ferragens e Fixadores</span>
<span class="t" style="left:100.3px;top:311.7px;line-height:16px;font-size:12px;color:#0c0c0c;letter-spacing:-0.335px;transform:scaleX(0.8862);transform-origin:0 50%;">Ferragens</span>
<span class="t" style="left:119.3px;top:327.7px;line-height:16px;font-size:12px;color:#0c0c0c;letter-spacing:-0.202px;transform:scaleX(0.9170);transform-origin:0 50%;">Corrediça Invisível</span>
<span class="t" style="left:119.3px;top:343.7px;line-height:16px;font-size:12px;color:#0c0c0c;letter-spacing:-0.210px;transform:scaleX(0.9196);transform-origin:0 50%;">Corrediça Telescopica</span>
<span class="t" style="left:119.3px;top:359.7px;line-height:16px;font-size:12px;color:#0c0c0c;letter-spacing:-0.361px;transform:scaleX(0.8852);transform-origin:0 50%;">Corrediça Comum</span>
<span class="t" style="left:119.3px;top:375.7px;line-height:16px;font-size:12px;color:#0c0c0c;letter-spacing:-0.257px;transform:scaleX(0.9101);transform-origin:0 50%;">Dobradiças</span>
<span class="t" style="left:119.3px;top:391.7px;line-height:16px;font-size:12px;color:#0c0c0c;letter-spacing:-0.327px;transform:scaleX(0.8930);transform-origin:0 50%;">Puxadores</span>
<span class="t" style="left:119.3px;top:407.7px;line-height:16px;font-size:12px;color:#0c0c0c;letter-spacing:-0.268px;transform:scaleX(0.9085);transform-origin:0 50%;">Kit Desempenador</span>
<span class="t" style="left:119.3px;top:423.7px;line-height:16px;font-size:12px;color:#0c0c0c;letter-spacing:-0.253px;transform:scaleX(0.9037);transform-origin:0 50%;">Sistema Portas Deslizantes Internas</span>
<span class="t" style="left:119.3px;top:439.7px;line-height:16px;font-size:12px;color:#0c0c0c;letter-spacing:-0.279px;transform:scaleX(0.8980);transform-origin:0 50%;">Cantoneira L</span>
<span class="t" style="left:119.3px;top:455.7px;line-height:16px;font-size:12px;color:#0c0c0c;letter-spacing:-0.299px;transform:scaleX(0.8917);transform-origin:0 50%;">Cavilhas</span>
<span class="t" style="left:119.3px;top:471.7px;line-height:16px;font-size:12px;color:#0c0c0c;letter-spacing:-0.305px;transform:scaleX(0.8723);transform-origin:0 50%;">Minifix</span>
<span class="t" style="left:119.3px;top:487.7px;line-height:16px;font-size:12px;color:#0c0c0c;letter-spacing:-0.286px;transform:scaleX(0.9005);transform-origin:0 50%;">Orçamento Corrediça</span>
<span class="t" style="left:119.3px;top:503.7px;line-height:16px;font-size:12px;color:#0c0c0c;letter-spacing:-0.254px;transform:scaleX(0.9124);transform-origin:0 50%;">Orçamento Dobradiça</span>
<span class="t" style="left:119.3px;top:519.7px;line-height:16px;font-size:12px;color:#0c0c0c;letter-spacing:-0.322px;transform:scaleX(0.8888);transform-origin:0 50%;">Parafuso</span>
<span class="t" style="left:119.3px;top:535.7px;line-height:16px;font-size:12px;color:#0c0c0c;letter-spacing:-0.264px;transform:scaleX(0.8949);transform-origin:0 50%;">Pino Prateleira</span>
<span class="t" style="left:119.3px;top:551.7px;line-height:16px;font-size:12px;color:#0c0c0c;letter-spacing:-0.212px;transform:scaleX(0.9229);transform-origin:0 50%;">Rodízios Mesas de Cabeceira / CPU</span>
<span class="t" style="left:119.3px;top:567.7px;line-height:16px;font-size:12px;color:#0c0c0c;letter-spacing:-0.238px;transform:scaleX(0.9047);transform-origin:0 50%;">Suporte Prateleira Vidro Interna</span>
<span class="t" style="left:119.3px;top:583.7px;line-height:16px;font-size:12px;color:#0c0c0c;letter-spacing:-0.253px;transform:scaleX(0.9069);transform-origin:0 50%;">Uniblock</span>
<span class="t" style="left:119.3px;top:599.7px;line-height:16px;font-size:12px;color:#0c0c0c;letter-spacing:-0.560px;transform:scaleX(0.8597);transform-origin:0 50%;">VB</span>
<span class="t" style="left:119.3px;top:615.7px;line-height:16px;font-size:12px;color:#0c0c0c;letter-spacing:-0.268px;transform:scaleX(0.9057);transform-origin:0 50%;">Furos de Fechadura</span>
<span class="t" style="left:119.3px;top:631.7px;line-height:16px;font-size:12px;color:#0c0c0c;letter-spacing:-0.500px;transform:scaleX(0.8552);transform-origin:0 50%;">Pés</span>
<span class="t" style="left:119.3px;top:647.7px;line-height:16px;font-size:12px;color:#0c0c0c;letter-spacing:-0.285px;transform:scaleX(0.9065);transform-origin:0 50%;">Pé Emborrachado</span>
<span class="t" style="left:119.3px;top:663.7px;line-height:16px;font-size:12px;color:#0c0c0c;letter-spacing:-0.340px;transform:scaleX(0.8763);transform-origin:0 50%;">Pistões</span>
<span class="t" style="left:119.3px;top:679.7px;line-height:16px;font-size:12px;color:#0c0c0c;letter-spacing:-0.329px;transform:scaleX(0.8821);transform-origin:0 50%;">Cabideiros</span>
<span class="t" style="left:100.3px;top:695.7px;line-height:16px;font-size:12px;color:#0c0c0c;letter-spacing:-0.345px;transform:scaleX(0.8792);transform-origin:0 50%;">Fixadores</span>
<span class="t" style="left:100.3px;top:711.7px;line-height:16px;font-size:12px;color:#0c0c0c;letter-spacing:-0.526px;transform:scaleX(0.8479);transform-origin:0 50%;">Blum</span>
<span class="t" style="left:100.3px;top:727.7px;line-height:16px;font-size:12px;color:#0c0c0c;letter-spacing:-0.284px;transform:scaleX(0.8973);transform-origin:0 50%;">Hafele</span>
<span class="t" style="left:100.3px;top:743.7px;line-height:16px;font-size:12px;color:#0c0c0c;letter-spacing:-0.299px;transform:scaleX(0.9012);transform-origin:0 50%;">Wurth</span>
<span class="t" style="left:100.3px;top:759.7px;line-height:16px;font-size:12px;color:#0c0c0c;letter-spacing:-0.421px;transform:scaleX(0.8922);transform-origin:0 50%;">FGVTN</span>
<span class="t" style="left:100.3px;top:775.7px;line-height:16px;font-size:12px;color:#0c0c0c;letter-spacing:-0.272px;transform:scaleX(0.9187);transform-origin:0 50%;">Dancamac</span>
<svg width="330" height="830" viewBox="0 0 330 830">
<g fill="none" stroke="#f20d12" stroke-linecap="round" stroke-linejoin="round">
<path d="M67.300 537.500L103 501" stroke-width="7"/>
<path d="M84.500 497.200Q101 497.500 115.300 487" stroke-width="6.200"/>
<path d="M115.300 487.300Q110.500 501 108.300 516.600" stroke-width="5.600"/>
<path d="M116.800 485.200L95 500.800L106.500 507Z" fill="#f20d12" stroke-width="2"/>
</g></svg>
<div class="a" style="left:320px;top:58px;width:680px;height:512px;background:#fff;border:1px solid #646464;"></div>
<svg width="1014" height="887" viewBox="0 0 1014 887">
<rect x="388.2" y="201.7" width="150.6" height="85.7" fill="#c7c3bd" stroke="#aeaba6" stroke-width="0.6"/>
<rect x="538.8" y="181.3" width="63.1" height="106.1" fill="#c7c3bd" stroke="#7b7874" stroke-width="0.9"/>
<rect x="415.3" y="224.4" width="123.5" height="63" fill="#f5f2f1"/>
<path d="M415.3 287.4V224.4H538.8" fill="none" stroke="#716e6a" stroke-width="0.75"/>
<rect x="472.2" y="273.4" width="66.6" height="14" fill="#c2beb8" stroke="#716e6a" stroke-width="0.7"/>
<rect x="489.3" y="231.4" width="49.5" height="34.9" fill="#dad8d6" stroke="#716e6a" stroke-width="0.7"/>
<path d="M415.3 224.3H424.6V230.3Q424.6 231.4 426.0 231.4H450.4V266.2H426.4L424.6 268V273.3H415.3Z" fill="#dcdad8"/>
<path d="M424.6 224.3V230.3Q424.6 231.4 426.0 231.4H450.4M421.4 224.3V231.5L424.6 235.1H446.8M446.8 261.3H425.1L421.4 265.3V273.3M450.4 266.2H426.4L424.6 268V273.3M415.3 273.3H424.6" fill="none" stroke="#716e6a" stroke-width="0.75"/>
<path d="M460.3 239.3H486.5Q488.3 239.3 489.3 237.3V260.4Q488.3 258.3 486.5 258.3H460.3Z" fill="#d5d3d1" stroke="#716e6a" stroke-width="0.75"/>
<path d="M445.9 239.1L450.4 231.5H456.6L460.3 239.1V258.6L456.6 266.3H450.4L445.9 258.6Z" fill="#d9d7d5"/>
<path d="M445.9 239.1L450.4 231.5H456.6L460.3 239.1V258.6L456.6 266.3H450.4L445.9 258.6" fill="none" stroke="#5f5c58" stroke-width="0.85"/>
<path d="M445.9 239.1V258.6" stroke="#6a6763" stroke-width="0.8" stroke-dasharray="1.6 1.2" fill="none"/>
<path d="M445.9 245.7H453.5V251.5H445.9" stroke="#55524e" stroke-width="1.1" fill="none"/>
<rect x="439.6" y="273.4" width="12.7" height="5.2" fill="#dcdad8" stroke="#716e6a" stroke-width="0.7"/>
<rect x="432.5" y="278.5" width="26.3" height="8.8" fill="#d3d1ce" stroke="#716e6a" stroke-width="0.7"/>
<rect x="425.2" y="287.3" width="40.5" height="3.2" fill="#dddbd8" stroke="#716e6a" stroke-width="0.7"/>
<rect x="443.6" y="280.3" width="4.6" height="7" fill="#e3e1de" stroke="#716e6a" stroke-width="0.7"/>
<path d="M445.9 226V293" stroke="#c4c2be" stroke-width="0.9" stroke-dasharray="1.4 2.6" fill="none"/>
<path d="M454.5 248.8H538" stroke="#b3b1ad" stroke-width="1" stroke-dasharray="1.6 2.4" fill="none"/>
<rect x="538.8" y="237.5" width="40" height="22.5" fill="#f3f1ef" stroke="#716e6a" stroke-width="0.7"/>
<path d="M539.4 239.2H573.1L577.5 243.1V254.4L573.1 258.5H539.4Z" fill="#d6d4d1" stroke="#7f7c78" stroke-width="0.7"/>
<path d="M541.20 239.5L541.90 258.2M543.50 239.5L544.20 258.2M545.80 239.5L546.50 258.2M548.10 239.5L548.80 258.2M550.40 239.5L551.10 258.2M552.70 239.5L553.40 258.2M555.00 239.5L555.70 258.2M557.30 239.5L558.00 258.2M559.60 239.5L560.30 258.2M561.90 239.5L562.60 258.2M564.20 239.5L564.90 258.2M566.50 239.5L567.20 258.2M568.80 239.5L569.50 258.2M571.10 239.5L571.80 258.2M573.40 239.5L574.10 258.2" stroke="#98958f" stroke-width="0.7" fill="none"/>
<path d="M381.8 199.9V289.2M379.3 201.7H386.3M379.3 287.4H386.3" stroke="#3c7f70" stroke-width="1.1" fill="none"/>
<path d="M407.8 222.6V289.4M405.3 224.4H412.3M405.3 287.6H412.3" stroke="#3c7f70" stroke-width="1.1" fill="none"/>
<path d="M413.2 217.4H475.3M415.0 214.9V221.9M473.5 214.9V221.9" stroke="#3c7f70" stroke-width="1.1" fill="none"/>
<path d="M444.2 194.4H541.0M446.0 191.9V198.9M539.2 191.9V198.9" stroke="#3c7f70" stroke-width="1.1" fill="none"/>
<path d="M444.2 297.3H541.0M446.0 292.8V299.8M539.2 292.8V299.8" stroke="#3c7f70" stroke-width="1.1" fill="none"/>
<path d="M505.7 222.8V275.3M503.2 224.6H510.2M503.2 273.5H510.2" stroke="#3c7f70" stroke-width="1.1" fill="none"/>
<path d="M530.5 246.6V289.0M528.0 248.4H535.0M528.0 287.2H535.0" stroke="#3c7f70" stroke-width="1.1" fill="none"/>
<path d="M585.9 235.7V262.0M581.4 237.5H588.4M581.4 260.2H588.4" stroke="#3c7f70" stroke-width="1.1" fill="none"/>
<path d="M537.0 267.1H580.8M538.8 262.6V269.6M579.0 262.6V269.6" stroke="#3c7f70" stroke-width="1.1" fill="none"/>
<text x="492.5" y="189.2" font-size="14" fill="#3c7f70" text-anchor="middle" textLength="9.4" lengthAdjust="spacingAndGlyphs" stroke="#3c7f70" stroke-width="0.2">D</text>
<text x="492.5" y="312.2" font-size="14" fill="#3c7f70" text-anchor="middle" textLength="9.4" lengthAdjust="spacingAndGlyphs" stroke="#3c7f70" stroke-width="0.2">C</text>
<text x="443.8" y="213.7" font-size="14" fill="#3c7f70" text-anchor="middle" textLength="12.8" lengthAdjust="spacingAndGlyphs" stroke="#3c7f70" stroke-width="0.2">15</text>
<text x="372.3" y="250.5" font-size="14" fill="#3c7f70" text-anchor="middle" textLength="12.8" lengthAdjust="spacingAndGlyphs" stroke="#3c7f70" stroke-width="0.2">15</text>
<text x="399.0" y="261.4" font-size="14" fill="#3c7f70" text-anchor="middle" textLength="8.7" lengthAdjust="spacingAndGlyphs" stroke="#3c7f70" stroke-width="0.2">A</text>
<text x="496.4" y="253.9" font-size="14" fill="#3c7f70" text-anchor="middle" textLength="7.2" lengthAdjust="spacingAndGlyphs" stroke="#3c7f70" stroke-width="0.2">8</text>
<text x="521.8" y="273.3" font-size="14" fill="#3c7f70" text-anchor="middle" textLength="10.1" lengthAdjust="spacingAndGlyphs" stroke="#3c7f70" stroke-width="0.2">G</text>
<text x="559.9" y="281.6" font-size="14" fill="#3c7f70" text-anchor="middle" textLength="8.7" lengthAdjust="spacingAndGlyphs" stroke="#3c7f70" stroke-width="0.2">E</text>
<text x="595.0" y="253.9" font-size="14" fill="#3c7f70" text-anchor="middle" textLength="7.9" lengthAdjust="spacingAndGlyphs" stroke="#3c7f70" stroke-width="0.2">F</text>
<text x="522.3" y="212.3" font-size="10.3" fill="#40403e" text-anchor="middle" textLength="19.8" lengthAdjust="spacingAndGlyphs" stroke="#40403e" stroke-width="0.15">Base</text>
<text x="570.2" y="191.1" font-size="10.3" fill="#40403e" text-anchor="middle" textLength="28.6" lengthAdjust="spacingAndGlyphs" stroke="#40403e" stroke-width="0.15">Lateral</text>
<rect x="655.4" y="201.9" width="300.6" height="85.5" fill="#c7c3bd" stroke="#aeaba6" stroke-width="0.6"/>
<rect x="681.7" y="224.5" width="248" height="62.9" fill="#f5f2f1"/>
<path d="M681.7 287.4V224.5H929.7V287.4" fill="none" stroke="#716e6a" stroke-width="0.75"/>
<rect x="739.4" y="273.6" width="132.6" height="13.8" fill="#c2beb8" stroke="#716e6a" stroke-width="0.7"/>
<rect x="756.5" y="231.3" width="98.4" height="35" fill="#dad8d6" stroke="#716e6a" stroke-width="0.7"/>
<path d="M681.8 224.3H691.1V230.3Q691.1 231.4 692.5 231.4H716.9V266.2H692.9L691.1 268V273.3H681.8Z" fill="#dcdad8"/>
<path d="M691.1 224.3V230.3Q691.1 231.4 692.5 231.4H716.9M687.9 224.3V231.5L691.1 235.1H713.3M713.3 261.3H691.6L687.9 265.3V273.3M716.9 266.2H692.9L691.1 268V273.3M681.8 273.3H691.1" fill="none" stroke="#716e6a" stroke-width="0.75"/>
<path d="M726.8 239.3H753.0Q754.8 239.3 755.8 237.3V260.4Q754.8 258.3 753.0 258.3H726.8Z" fill="#d5d3d1" stroke="#716e6a" stroke-width="0.75"/>
<path d="M712.4 239.1L716.9 231.5H723.1L726.8 239.1V258.6L723.1 266.3H716.9L712.4 258.6Z" fill="#d9d7d5"/>
<path d="M712.4 239.1L716.9 231.5H723.1L726.8 239.1V258.6L723.1 266.3H716.9L712.4 258.6" fill="none" stroke="#5f5c58" stroke-width="0.85"/>
<path d="M712.4 239.1V258.6" stroke="#6a6763" stroke-width="0.8" stroke-dasharray="1.6 1.2" fill="none"/>
<path d="M712.4 245.7H720.0V251.5H712.4" stroke="#55524e" stroke-width="1.1" fill="none"/>
<rect x="706.1" y="273.4" width="12.7" height="5.2" fill="#dcdad8" stroke="#716e6a" stroke-width="0.7"/>
<rect x="699.0" y="278.5" width="26.3" height="8.8" fill="#d3d1ce" stroke="#716e6a" stroke-width="0.7"/>
<rect x="691.7" y="287.3" width="40.5" height="3.2" fill="#dddbd8" stroke="#716e6a" stroke-width="0.7"/>
<rect x="710.1" y="280.3" width="4.6" height="7" fill="#e3e1de" stroke="#716e6a" stroke-width="0.7"/>
<path d="M712.4 226V293" stroke="#c4c2be" stroke-width="0.9" stroke-dasharray="1.4 2.6" fill="none"/>
<g transform="translate(1611.4 0) scale(-1 1)"><path d="M681.8 224.3H691.1V230.3Q691.1 231.4 692.5 231.4H716.9V266.2H692.9L691.1 268V273.3H681.8Z" fill="#dcdad8"/>
<path d="M691.1 224.3V230.3Q691.1 231.4 692.5 231.4H716.9M687.9 224.3V231.5L691.1 235.1H713.3M713.3 261.3H691.6L687.9 265.3V273.3M716.9 266.2H692.9L691.1 268V273.3M681.8 273.3H691.1" fill="none" stroke="#716e6a" stroke-width="0.75"/>
<path d="M726.8 239.3H753.0Q754.8 239.3 755.8 237.3V260.4Q754.8 258.3 753.0 258.3H726.8Z" fill="#d5d3d1" stroke="#716e6a" stroke-width="0.75"/>
<path d="M712.4 239.1L716.9 231.5H723.1L726.8 239.1V258.6L723.1 266.3H716.9L712.4 258.6Z" fill="#d9d7d5"/>
<path d="M712.4 239.1L716.9 231.5H723.1L726.8 239.1V258.6L723.1 266.3H716.9L712.4 258.6" fill="none" stroke="#5f5c58" stroke-width="0.85"/>
<path d="M712.4 239.1V258.6" stroke="#6a6763" stroke-width="0.8" stroke-dasharray="1.6 1.2" fill="none"/>
<path d="M712.4 245.7H720.0V251.5H712.4" stroke="#55524e" stroke-width="1.1" fill="none"/>
<rect x="706.1" y="273.4" width="12.7" height="5.2" fill="#dcdad8" stroke="#716e6a" stroke-width="0.7"/>
<rect x="699.0" y="278.5" width="26.3" height="8.8" fill="#d3d1ce" stroke="#716e6a" stroke-width="0.7"/>
<rect x="691.7" y="287.3" width="40.5" height="3.2" fill="#dddbd8" stroke="#716e6a" stroke-width="0.7"/>
<rect x="710.1" y="280.3" width="4.6" height="7" fill="#e3e1de" stroke="#716e6a" stroke-width="0.7"/>
<path d="M712.4 226V293" stroke="#c4c2be" stroke-width="0.9" stroke-dasharray="1.4 2.6" fill="none"/></g>
<path d="M721 248.8H891" stroke="#b3b1ad" stroke-width="1" stroke-dasharray="1.6 2.4" fill="none"/>
<path d="M805.7 201.9V287.4" stroke="#6d6a66" stroke-width="0.9" fill="none"/>
<path d="M648.5 200.1V289.2M646.0 201.9H653.0M646.0 287.4H653.0" stroke="#3c7f70" stroke-width="1.1" fill="none"/>
<path d="M674.4 222.7V289.4M671.9 224.5H678.9M671.9 287.6H678.9" stroke="#3c7f70" stroke-width="1.1" fill="none"/>
<path d="M679.4 217.7H742.4M681.2 215.2V222.2M740.6 215.2V222.2" stroke="#3c7f70" stroke-width="1.1" fill="none"/>
<path d="M710.6 194.6H807.5M712.4 192.1V199.1M805.7 192.1V199.1" stroke="#3c7f70" stroke-width="1.1" fill="none"/>
<path d="M710.6 297.3H807.5M712.4 292.8V299.8M805.7 292.8V299.8" stroke="#3c7f70" stroke-width="1.1" fill="none"/>
<path d="M772.5 222.8V275.4M770.0 224.6H777.0M770.0 273.6H777.0" stroke="#3c7f70" stroke-width="1.1" fill="none"/>
<path d="M797.6 246.6V289.0M795.1 248.4H802.1M795.1 287.2H802.1" stroke="#3c7f70" stroke-width="1.1" fill="none"/>
<path d="M937.0 222.7V289.4M932.5 224.5H939.5M932.5 287.6H939.5" stroke="#3c7f70" stroke-width="1.1" fill="none"/>
<path d="M869.0 217.7H932.0M870.8 215.2V222.2M930.2 215.2V222.2" stroke="#3c7f70" stroke-width="1.1" fill="none"/>
<path d="M805.7 194.6H899.0M805.7 192.1V199.1M899.0 192.1V199.1" stroke="#3c7f70" stroke-width="1.1" fill="none"/>
<path d="M805.7 297.3H899.0M805.7 292.8V299.8M899.0 292.8V299.8" stroke="#3c7f70" stroke-width="1.1" fill="none"/>
<path d="M838.9 222.8V275.4M834.4 224.6H841.4M834.4 273.6H841.4" stroke="#3c7f70" stroke-width="1.1" fill="none"/>
<path d="M813.8 246.6V289.0M809.3 248.4H816.3M809.3 287.2H816.3" stroke="#3c7f70" stroke-width="1.1" fill="none"/>
<path d="M899.0 194.6h1.8M899.0 297.3h1.8" stroke="#3c7f70" stroke-width="1.1" fill="none"/>
<text x="757.0" y="191.3" font-size="14" fill="#3c7f70" text-anchor="middle" textLength="10.8" lengthAdjust="spacingAndGlyphs" stroke="#3c7f70" stroke-width="0.2">M</text>
<text x="854.5" y="191.3" font-size="14" fill="#3c7f70" text-anchor="middle" textLength="9.4" lengthAdjust="spacingAndGlyphs" stroke="#3c7f70" stroke-width="0.2">N</text>
<text x="760.6" y="311.8" font-size="14" fill="#3c7f70" text-anchor="middle" textLength="8.7" lengthAdjust="spacingAndGlyphs" stroke="#3c7f70" stroke-width="0.2">K</text>
<text x="852.4" y="311.8" font-size="14" fill="#3c7f70" text-anchor="middle" textLength="7.2" lengthAdjust="spacingAndGlyphs" stroke="#3c7f70" stroke-width="0.2">L</text>
<text x="711.2" y="213.9" font-size="14" fill="#3c7f70" text-anchor="middle" textLength="12.8" lengthAdjust="spacingAndGlyphs" stroke="#3c7f70" stroke-width="0.2">15</text>
<text x="900.3" y="213.9" font-size="14" fill="#3c7f70" text-anchor="middle" textLength="12.8" lengthAdjust="spacingAndGlyphs" stroke="#3c7f70" stroke-width="0.2">15</text>
<text x="638.3" y="250.6" font-size="14" fill="#3c7f70" text-anchor="middle" textLength="12.8" lengthAdjust="spacingAndGlyphs" stroke="#3c7f70" stroke-width="0.2">15</text>
<text x="665.7" y="260.6" font-size="14" fill="#3c7f70" text-anchor="middle" textLength="3.6" lengthAdjust="spacingAndGlyphs" stroke="#3c7f70" stroke-width="0.2">I</text>
<text x="945.8" y="260.6" font-size="14" fill="#3c7f70" text-anchor="middle" textLength="3.6" lengthAdjust="spacingAndGlyphs" stroke="#3c7f70" stroke-width="0.2">I</text>
<text x="763.3" y="253.9" font-size="14" fill="#3c7f70" text-anchor="middle" textLength="7.2" lengthAdjust="spacingAndGlyphs" stroke="#3c7f70" stroke-width="0.2">8</text>
<text x="848.2" y="253.9" font-size="14" fill="#3c7f70" text-anchor="middle" textLength="7.2" lengthAdjust="spacingAndGlyphs" stroke="#3c7f70" stroke-width="0.2">8</text>
<text x="788.4" y="273.5" font-size="14" fill="#3c7f70" text-anchor="middle" textLength="10.1" lengthAdjust="spacingAndGlyphs" stroke="#3c7f70" stroke-width="0.2">G</text>
<text x="823.3" y="273.5" font-size="14" fill="#3c7f70" text-anchor="middle" textLength="10.1" lengthAdjust="spacingAndGlyphs" stroke="#3c7f70" stroke-width="0.2">G</text>
<text x="788.9" y="212.5" font-size="10.3" fill="#40403e" text-anchor="middle" textLength="19.8" lengthAdjust="spacingAndGlyphs" stroke="#40403e" stroke-width="0.15">Base</text>
<text x="820.7" y="212.5" font-size="10.3" fill="#40403e" text-anchor="middle" textLength="19.8" lengthAdjust="spacingAndGlyphs" stroke="#40403e" stroke-width="0.15">Base</text>
<rect x="388.2" y="429.1" width="150.6" height="85.7" fill="#c7c3bd" stroke="#aeaba6" stroke-width="0.6"/>
<rect x="538.8" y="408.7" width="63.1" height="106.1" fill="#c7c3bd" stroke="#7b7874" stroke-width="0.9"/>
<rect x="415.3" y="451.8" width="123.5" height="63" fill="#f5f2f1"/>
<path d="M415.3 514.8V451.8H538.8" fill="none" stroke="#716e6a" stroke-width="0.75"/>
<rect x="472.2" y="500.8" width="66.6" height="14" fill="#c2beb8" stroke="#716e6a" stroke-width="0.7"/>
<rect x="489.3" y="458.8" width="49.5" height="34.9" fill="#dad8d6" stroke="#716e6a" stroke-width="0.7"/>
<path d="M415.3 451.7H424.6V457.7Q424.6 458.8 426.0 458.8H450.4V493.6H426.4L424.6 495.4V500.7H415.3Z" fill="#dcdad8"/>
<path d="M424.6 451.7V457.7Q424.6 458.8 426.0 458.8H450.4M421.4 451.7V458.9L424.6 462.5H446.8M446.8 488.7H425.1L421.4 492.7V500.7M450.4 493.6H426.4L424.6 495.4V500.7M415.3 500.7H424.6" fill="none" stroke="#716e6a" stroke-width="0.75"/>
<path d="M460.3 466.7H486.5Q488.3 466.7 489.3 464.7V487.8Q488.3 485.7 486.5 485.7H460.3Z" fill="#d5d3d1" stroke="#716e6a" stroke-width="0.75"/>
<path d="M445.9 466.5L450.4 458.9H456.6L460.3 466.5V486.0L456.6 493.7H450.4L445.9 486.0Z" fill="#d9d7d5"/>
<path d="M445.9 466.5L450.4 458.9H456.6L460.3 466.5V486.0L456.6 493.7H450.4L445.9 486.0" fill="none" stroke="#5f5c58" stroke-width="0.85"/>
<path d="M445.9 466.5V486.0" stroke="#6a6763" stroke-width="0.8" stroke-dasharray="1.6 1.2" fill="none"/>
<path d="M445.9 473.1H453.5V478.9H445.9" stroke="#55524e" stroke-width="1.1" fill="none"/>
<rect x="439.6" y="500.8" width="12.7" height="5.2" fill="#dcdad8" stroke="#716e6a" stroke-width="0.7"/>
<rect x="432.5" y="505.9" width="26.3" height="8.8" fill="#d3d1ce" stroke="#716e6a" stroke-width="0.7"/>
<rect x="425.2" y="514.7" width="40.5" height="3.2" fill="#dddbd8" stroke="#716e6a" stroke-width="0.7"/>
<rect x="443.6" y="507.7" width="4.6" height="7" fill="#e3e1de" stroke="#716e6a" stroke-width="0.7"/>
<path d="M445.9 453.4V520.4" stroke="#c4c2be" stroke-width="0.9" stroke-dasharray="1.4 2.6" fill="none"/>
<path d="M454.5 476.2H538" stroke="#b3b1ad" stroke-width="1" stroke-dasharray="1.6 2.4" fill="none"/>
<rect x="538.8" y="464.9" width="40" height="22.5" fill="#f3f1ef" stroke="#716e6a" stroke-width="0.7"/>
<path d="M539.4 466.6H573.1L577.5 470.5V481.8L573.1 485.9H539.4Z" fill="#d6d4d1" stroke="#7f7c78" stroke-width="0.7"/>
<path d="M541.20 466.9L541.90 485.6M543.50 466.9L544.20 485.6M545.80 466.9L546.50 485.6M548.10 466.9L548.80 485.6M550.40 466.9L551.10 485.6M552.70 466.9L553.40 485.6M555.00 466.9L555.70 485.6M557.30 466.9L558.00 485.6M559.60 466.9L560.30 485.6M561.90 466.9L562.60 485.6M564.20 466.9L564.90 485.6M566.50 466.9L567.20 485.6M568.80 466.9L569.50 485.6M571.10 466.9L571.80 485.6M573.40 466.9L574.10 485.6" stroke="#98958f" stroke-width="0.7" fill="none"/>
<path d="M381.8 427.3V516.6M379.3 429.1H386.3M379.3 514.8H386.3" stroke="#3c7f70" stroke-width="1.1" fill="none"/>
<path d="M407.8 450.0V516.8M405.3 451.8H412.3M405.3 515.0H412.3" stroke="#3c7f70" stroke-width="1.1" fill="none"/>
<path d="M413.2 444.8H475.3M415.0 442.3V449.3M473.5 442.3V449.3" stroke="#3c7f70" stroke-width="1.1" fill="none"/>
<path d="M444.2 421.8H541.0M446.0 419.3V426.3M539.2 419.3V426.3" stroke="#3c7f70" stroke-width="1.1" fill="none"/>
<path d="M444.2 524.7H541.0M446.0 520.2V527.2M539.2 520.2V527.2" stroke="#3c7f70" stroke-width="1.1" fill="none"/>
<path d="M505.7 450.2V502.7M503.2 452.0H510.2M503.2 500.9H510.2" stroke="#3c7f70" stroke-width="1.1" fill="none"/>
<path d="M530.5 474.0V516.4M528.0 475.8H535.0M528.0 514.6H535.0" stroke="#3c7f70" stroke-width="1.1" fill="none"/>
<path d="M585.9 463.1V489.4M581.4 464.9H588.4M581.4 487.6H588.4" stroke="#3c7f70" stroke-width="1.1" fill="none"/>
<path d="M537.0 494.5H580.8M538.8 490.0V497.0M579.0 490.0V497.0" stroke="#3c7f70" stroke-width="1.1" fill="none"/>
<text x="492.5" y="417.8" font-size="14" fill="#3c7f70" text-anchor="middle" textLength="9.4" lengthAdjust="spacingAndGlyphs" stroke="#3c7f70" stroke-width="0.2">D</text>
<text x="492.5" y="539.6" font-size="14" fill="#3c7f70" text-anchor="middle" textLength="9.4" lengthAdjust="spacingAndGlyphs" stroke="#3c7f70" stroke-width="0.2">C</text>
<text x="443.8" y="441.1" font-size="14" fill="#3c7f70" text-anchor="middle" textLength="12.8" lengthAdjust="spacingAndGlyphs" stroke="#3c7f70" stroke-width="0.2">15</text>
<text x="372.3" y="477.9" font-size="14" fill="#3c7f70" text-anchor="middle" textLength="12.8" lengthAdjust="spacingAndGlyphs" stroke="#3c7f70" stroke-width="0.2">18</text>
<text x="399.0" y="488.8" font-size="14" fill="#3c7f70" text-anchor="middle" textLength="8.7" lengthAdjust="spacingAndGlyphs" stroke="#3c7f70" stroke-width="0.2">B</text>
<text x="496.4" y="481.3" font-size="14" fill="#3c7f70" text-anchor="middle" textLength="7.2" lengthAdjust="spacingAndGlyphs" stroke="#3c7f70" stroke-width="0.2">8</text>
<text x="521.8" y="500.7" font-size="14" fill="#3c7f70" text-anchor="middle" textLength="9.4" lengthAdjust="spacingAndGlyphs" stroke="#3c7f70" stroke-width="0.2">H</text>
<text x="559.9" y="509.0" font-size="14" fill="#3c7f70" text-anchor="middle" textLength="8.7" lengthAdjust="spacingAndGlyphs" stroke="#3c7f70" stroke-width="0.2">E</text>
<text x="595.0" y="481.3" font-size="14" fill="#3c7f70" text-anchor="middle" textLength="7.9" lengthAdjust="spacingAndGlyphs" stroke="#3c7f70" stroke-width="0.2">F</text>
<text x="522.3" y="439.7" font-size="10.3" fill="#40403e" text-anchor="middle" textLength="19.8" lengthAdjust="spacingAndGlyphs" stroke="#40403e" stroke-width="0.15">Base</text>
<text x="572.7" y="418.5" font-size="10.3" fill="#40403e" text-anchor="middle" textLength="28.6" lengthAdjust="spacingAndGlyphs" stroke="#40403e" stroke-width="0.15">Lateral</text>
<rect x="655.4" y="430.6" width="300.6" height="85.5" fill="#c7c3bd" stroke="#aeaba6" stroke-width="0.6"/>
<rect x="681.7" y="453.2" width="248" height="62.9" fill="#f5f2f1"/>
<path d="M681.7 516.1V453.2H929.7V516.1" fill="none" stroke="#716e6a" stroke-width="0.75"/>
<rect x="739.4" y="502.3" width="132.6" height="13.8" fill="#c2beb8" stroke="#716e6a" stroke-width="0.7"/>
<rect x="756.5" y="460.0" width="98.4" height="35" fill="#dad8d6" stroke="#716e6a" stroke-width="0.7"/>
<path d="M681.8 453.0H691.1V459.0Q691.1 460.1 692.5 460.1H716.9V494.9H692.9L691.1 496.7V502.0H681.8Z" fill="#dcdad8"/>
<path d="M691.1 453.0V459.0Q691.1 460.1 692.5 460.1H716.9M687.9 453.0V460.2L691.1 463.8H713.3M713.3 490.0H691.6L687.9 494.0V502.0M716.9 494.9H692.9L691.1 496.7V502.0M681.8 502.0H691.1" fill="none" stroke="#716e6a" stroke-width="0.75"/>
<path d="M726.8 468.0H753.0Q754.8 468.0 755.8 466.0V489.1Q754.8 487.0 753.0 487.0H726.8Z" fill="#d5d3d1" stroke="#716e6a" stroke-width="0.75"/>
<path d="M712.4 467.8L716.9 460.2H723.1L726.8 467.8V487.3L723.1 495.0H716.9L712.4 487.3Z" fill="#d9d7d5"/>
<path d="M712.4 467.8L716.9 460.2H723.1L726.8 467.8V487.3L723.1 495.0H716.9L712.4 487.3" fill="none" stroke="#5f5c58" stroke-width="0.85"/>
<path d="M712.4 467.8V487.3" stroke="#6a6763" stroke-width="0.8" stroke-dasharray="1.6 1.2" fill="none"/>
<path d="M712.4 474.4H720.0V480.2H712.4" stroke="#55524e" stroke-width="1.1" fill="none"/>
<rect x="706.1" y="502.1" width="12.7" height="5.2" fill="#dcdad8" stroke="#716e6a" stroke-width="0.7"/>
<rect x="699.0" y="507.2" width="26.3" height="8.8" fill="#d3d1ce" stroke="#716e6a" stroke-width="0.7"/>
<rect x="691.7" y="516.0" width="40.5" height="3.2" fill="#dddbd8" stroke="#716e6a" stroke-width="0.7"/>
<rect x="710.1" y="509.0" width="4.6" height="7" fill="#e3e1de" stroke="#716e6a" stroke-width="0.7"/>
<path d="M712.4 454.7V521.7" stroke="#c4c2be" stroke-width="0.9" stroke-dasharray="1.4 2.6" fill="none"/>
<g transform="translate(1611.4 0) scale(-1 1)"><path d="M681.8 453.0H691.1V459.0Q691.1 460.1 692.5 460.1H716.9V494.9H692.9L691.1 496.7V502.0H681.8Z" fill="#dcdad8"/>
<path d="M691.1 453.0V459.0Q691.1 460.1 692.5 460.1H716.9M687.9 453.0V460.2L691.1 463.8H713.3M713.3 490.0H691.6L687.9 494.0V502.0M716.9 494.9H692.9L691.1 496.7V502.0M681.8 502.0H691.1" fill="none" stroke="#716e6a" stroke-width="0.75"/>
<path d="M726.8 468.0H753.0Q754.8 468.0 755.8 466.0V489.1Q754.8 487.0 753.0 487.0H726.8Z" fill="#d5d3d1" stroke="#716e6a" stroke-width="0.75"/>
<path d="M712.4 467.8L716.9 460.2H723.1L726.8 467.8V487.3L723.1 495.0H716.9L712.4 487.3Z" fill="#d9d7d5"/>
<path d="M712.4 467.8L716.9 460.2H723.1L726.8 467.8V487.3L723.1 495.0H716.9L712.4 487.3" fill="none" stroke="#5f5c58" stroke-width="0.85"/>
<path d="M712.4 467.8V487.3" stroke="#6a6763" stroke-width="0.8" stroke-dasharray="1.6 1.2" fill="none"/>
<path d="M712.4 474.4H720.0V480.2H712.4" stroke="#55524e" stroke-width="1.1" fill="none"/>
<rect x="706.1" y="502.1" width="12.7" height="5.2" fill="#dcdad8" stroke="#716e6a" stroke-width="0.7"/>
<rect x="699.0" y="507.2" width="26.3" height="8.8" fill="#d3d1ce" stroke="#716e6a" stroke-width="0.7"/>
<rect x="691.7" y="516.0" width="40.5" height="3.2" fill="#dddbd8" stroke="#716e6a" stroke-width="0.7"/>
<rect x="710.1" y="509.0" width="4.6" height="7" fill="#e3e1de" stroke="#716e6a" stroke-width="0.7"/>
<path d="M712.4 454.7V521.7" stroke="#c4c2be" stroke-width="0.9" stroke-dasharray="1.4 2.6" fill="none"/></g>
<path d="M721 477.5H891" stroke="#b3b1ad" stroke-width="1" stroke-dasharray="1.6 2.4" fill="none"/>
<path d="M805.7 430.6V516.1" stroke="#6d6a66" stroke-width="0.9" fill="none"/>
<path d="M648.5 428.8V517.9M646.0 430.6H653.0M646.0 516.1H653.0" stroke="#3c7f70" stroke-width="1.1" fill="none"/>
<path d="M674.4 451.4V518.1M671.9 453.2H678.9M671.9 516.3H678.9" stroke="#3c7f70" stroke-width="1.1" fill="none"/>
<path d="M679.4 446.4H742.4M681.2 443.9V450.9M740.6 443.9V450.9" stroke="#3c7f70" stroke-width="1.1" fill="none"/>
<path d="M710.6 423.3H807.5M712.4 420.8V427.8M805.7 420.8V427.8" stroke="#3c7f70" stroke-width="1.1" fill="none"/>
<path d="M710.6 526.0H807.5M712.4 521.5V528.5M805.7 521.5V528.5" stroke="#3c7f70" stroke-width="1.1" fill="none"/>
<path d="M772.5 451.5V504.1M770.0 453.3H777.0M770.0 502.3H777.0" stroke="#3c7f70" stroke-width="1.1" fill="none"/>
<path d="M797.6 475.3V517.7M795.1 477.1H802.1M795.1 515.9H802.1" stroke="#3c7f70" stroke-width="1.1" fill="none"/>
<path d="M937.0 451.4V518.1M932.5 453.2H939.5M932.5 516.3H939.5" stroke="#3c7f70" stroke-width="1.1" fill="none"/>
<path d="M869.0 446.4H932.0M870.8 443.9V450.9M930.2 443.9V450.9" stroke="#3c7f70" stroke-width="1.1" fill="none"/>
<path d="M805.7 423.3H899.0M805.7 420.8V427.8M899.0 420.8V427.8" stroke="#3c7f70" stroke-width="1.1" fill="none"/>
<path d="M805.7 526.0H899.0M805.7 521.5V528.5M899.0 521.5V528.5" stroke="#3c7f70" stroke-width="1.1" fill="none"/>
<path d="M838.9 451.5V504.1M834.4 453.3H841.4M834.4 502.3H841.4" stroke="#3c7f70" stroke-width="1.1" fill="none"/>
<path d="M813.8 475.3V517.7M809.3 477.1H816.3M809.3 515.9H816.3" stroke="#3c7f70" stroke-width="1.1" fill="none"/>
<path d="M899.0 423.3h1.8M899.0 526.0h1.8" stroke="#3c7f70" stroke-width="1.1" fill="none"/>
<text x="757.0" y="420.0" font-size="14" fill="#3c7f70" text-anchor="middle" textLength="10.8" lengthAdjust="spacingAndGlyphs" stroke="#3c7f70" stroke-width="0.2">M</text>
<text x="854.5" y="420.0" font-size="14" fill="#3c7f70" text-anchor="middle" textLength="9.4" lengthAdjust="spacingAndGlyphs" stroke="#3c7f70" stroke-width="0.2">N</text>
<text x="760.6" y="540.5" font-size="14" fill="#3c7f70" text-anchor="middle" textLength="8.7" lengthAdjust="spacingAndGlyphs" stroke="#3c7f70" stroke-width="0.2">K</text>
<text x="852.4" y="540.5" font-size="14" fill="#3c7f70" text-anchor="middle" textLength="7.2" lengthAdjust="spacingAndGlyphs" stroke="#3c7f70" stroke-width="0.2">L</text>
<text x="711.2" y="442.6" font-size="14" fill="#3c7f70" text-anchor="middle" textLength="12.8" lengthAdjust="spacingAndGlyphs" stroke="#3c7f70" stroke-width="0.2">15</text>
<text x="900.3" y="442.6" font-size="14" fill="#3c7f70" text-anchor="middle" textLength="12.8" lengthAdjust="spacingAndGlyphs" stroke="#3c7f70" stroke-width="0.2">15</text>
<text x="638.3" y="479.3" font-size="14" fill="#3c7f70" text-anchor="middle" textLength="12.8" lengthAdjust="spacingAndGlyphs" stroke="#3c7f70" stroke-width="0.2">18</text>
<text x="665.7" y="490.8" font-size="14" fill="#3c7f70" text-anchor="middle" textLength="6.5" lengthAdjust="spacingAndGlyphs" stroke="#3c7f70" stroke-width="0.2">J</text>
<text x="945.8" y="490.8" font-size="14" fill="#3c7f70" text-anchor="middle" textLength="6.5" lengthAdjust="spacingAndGlyphs" stroke="#3c7f70" stroke-width="0.2">J</text>
<text x="763.3" y="482.6" font-size="14" fill="#3c7f70" text-anchor="middle" textLength="7.2" lengthAdjust="spacingAndGlyphs" stroke="#3c7f70" stroke-width="0.2">8</text>
<text x="848.2" y="482.6" font-size="14" fill="#3c7f70" text-anchor="middle" textLength="7.2" lengthAdjust="spacingAndGlyphs" stroke="#3c7f70" stroke-width="0.2">8</text>
<text x="788.4" y="502.2" font-size="14" fill="#3c7f70" text-anchor="middle" textLength="9.4" lengthAdjust="spacingAndGlyphs" stroke="#3c7f70" stroke-width="0.2">H</text>
<text x="823.3" y="502.2" font-size="14" fill="#3c7f70" text-anchor="middle" textLength="9.4" lengthAdjust="spacingAndGlyphs" stroke="#3c7f70" stroke-width="0.2">H</text>
<text x="788.9" y="441.2" font-size="10.3" fill="#40403e" text-anchor="middle" textLength="19.8" lengthAdjust="spacingAndGlyphs" stroke="#40403e" stroke-width="0.15">Base</text>
<text x="820.7" y="441.2" font-size="10.3" fill="#40403e" text-anchor="middle" textLength="19.8" lengthAdjust="spacingAndGlyphs" stroke="#40403e" stroke-width="0.15">Base</text>
<text x="388.6" y="101.0" font-size="14.5" fill="#1a1a1a" text-anchor="start" textLength="42.0" lengthAdjust="spacingAndGlyphs" stroke="#1a1a1a" stroke-width="0.3">Minifix</text>
<text x="388.8" y="115.0" font-size="12" fill="#7b7b7b" text-anchor="start" textLength="61.0" lengthAdjust="spacingAndGlyphs">Vista Lateral</text>
<text x="388.8" y="137.0" font-size="12" fill="#666" text-anchor="start" textLength="71.5" lengthAdjust="spacingAndGlyphs">Minifix 15mm</text>
<text x="655.7" y="137.0" font-size="12" fill="#666" text-anchor="start" textLength="178.5" lengthAdjust="spacingAndGlyphs">Minifix 15mm - Bases / Prateleiras</text>
<text x="388.8" y="344.0" font-size="12" fill="#7b7b7b" text-anchor="start" textLength="61.0" lengthAdjust="spacingAndGlyphs">Vista Lateral</text>
<text x="388.8" y="366.0" font-size="12" fill="#666" text-anchor="start" textLength="95.5" lengthAdjust="spacingAndGlyphs">Minifix 18 / 25mm</text>
<text x="655.7" y="366.0" font-size="12" fill="#666" text-anchor="start" textLength="203.0" lengthAdjust="spacingAndGlyphs">Minifix 18 / 25mm - Bases / Prateleiras</text>
</svg>
<div class="a" style="left:326.5px;top:583px;width:669.5px;height:19.5px;background:#bad1ea;border-radius:4px;"></div>
<span class="t" style="left:335.3px;top:584.3px;line-height:16px;font-size:12px;color:#0c0c0c;letter-spacing:-0.101px;transform:scaleX(0.9582);transform-origin:0 50%;">Furação Minifix</span>
<svg width="1014" height="887" viewBox="0 0 1014 887"><circle cx="982.8" cy="593.5" r="8.6" fill="#8fa3bb" opacity="0.5"/><circle cx="982.6" cy="592.5" r="8" fill="#f6f8fb" stroke="#8e9aa8" stroke-width="0.9"/><path transform="translate(982.6 592.5)" d="M-3 -0.500L0 -3L3 -0.500M-3 3.500L0 1L3 3.500" stroke="#1a1a1a" stroke-width="1.3" fill="none"/></svg>
<div class="a" style="left:326.5px;top:770.5px;width:669.5px;height:19.5px;background:#bad1ea;border-radius:4px;"></div>
<span class="t" style="left:335.3px;top:771.8px;line-height:16px;font-size:12px;color:#0c0c0c;letter-spacing:-0.107px;transform:scaleX(0.9551);transform-origin:0 50%;">Furação Minifix - Bases/Prateleiras L</span>
<svg width="1014" height="887" viewBox="0 0 1014 887"><circle cx="982.8" cy="781.0" r="8.6" fill="#8fa3bb" opacity="0.5"/><circle cx="982.6" cy="780.0" r="8" fill="#f6f8fb" stroke="#8e9aa8" stroke-width="0.9"/><path transform="translate(982.6 780.0)" d="M-3 -3.5L0 -1L3 -3.5M-3 0.500L0 3L3 0.500" stroke="#1a1a1a" stroke-width="1.3" fill="none"/></svg>
<div class="a" style="left:928px;top:604.5px;width:66px;height:19.500px;background:#fff;"></div>
<div class="a" style="left:339px;top:624.0px;width:655px;height:1px;background:#a6a6a6;"></div>
<span class="t" style="left:345.2px;top:606.7px;line-height:16px;font-size:12px;color:#0c0c0c;letter-spacing:-0.244px;transform:scaleX(0.9093);transform-origin:0 50%;">A - Profundidade Furo Tambor do Minifix 15mm</span>
<span class="t" style="left:932.3px;top:606.7px;line-height:16px;font-size:12px;color:#000;letter-spacing:-0.574px;">13</span>
<div class="a" style="left:928px;top:624.5px;width:66px;height:19.500px;background:#fff;"></div>
<div class="a" style="left:339px;top:644.0px;width:655px;height:1px;background:#a6a6a6;"></div>
<span class="t" style="left:345.2px;top:626.7px;line-height:16px;font-size:12px;color:#0c0c0c;letter-spacing:-0.226px;transform:scaleX(0.9156);transform-origin:0 50%;">B - Profundidade Furo Tambor do Minifix 18/25mm</span>
<span class="t" style="left:932.3px;top:626.7px;line-height:16px;font-size:12px;color:#000;letter-spacing:-0.589px;">13,5</span>
<div class="a" style="left:928px;top:644.5px;width:66px;height:19.500px;background:#fff;"></div>
<div class="a" style="left:339px;top:664.0px;width:655px;height:1px;background:#a6a6a6;"></div>
<span class="t" style="left:345.2px;top:646.7px;line-height:16px;font-size:12px;color:#0c0c0c;letter-spacing:-0.231px;transform:scaleX(0.9089);transform-origin:0 50%;">C - Distância Furo Tambor Minifix</span>
<span class="t" style="left:932.3px;top:646.7px;line-height:16px;font-size:12px;color:#000;letter-spacing:-0.574px;">24</span>
<div class="a" style="left:928px;top:664.5px;width:66px;height:19.500px;background:#fff;"></div>
<div class="a" style="left:339px;top:684.0px;width:655px;height:1px;background:#a6a6a6;"></div>
<span class="t" style="left:345.2px;top:666.7px;line-height:16px;font-size:12px;color:#0c0c0c;letter-spacing:-0.233px;transform:scaleX(0.9083);transform-origin:0 50%;">D - Profundidade Furo Pino Minifix</span>
<span class="t" style="left:932.3px;top:666.7px;line-height:16px;font-size:12px;color:#000;letter-spacing:-0.574px;">24</span>
<div class="a" style="left:928px;top:684.5px;width:66px;height:19.500px;background:#fff;"></div>
<div class="a" style="left:339px;top:704.0px;width:655px;height:1px;background:#a6a6a6;"></div>
<span class="t" style="left:345.2px;top:686.7px;line-height:16px;font-size:12px;color:#0c0c0c;letter-spacing:-0.242px;transform:scaleX(0.9060);transform-origin:0 50%;">E - Profundidade Furo Parafuso Minifix</span>
<span class="t" style="left:932.3px;top:686.7px;line-height:16px;font-size:12px;color:#000;letter-spacing:-0.574px;">10</span>
<div class="a" style="left:928px;top:704.5px;width:66px;height:19.500px;background:#fff;"></div>
<div class="a" style="left:339px;top:724.0px;width:655px;height:1px;background:#a6a6a6;"></div>
<span class="t" style="left:345.2px;top:706.7px;line-height:16px;font-size:12px;color:#0c0c0c;letter-spacing:-0.260px;transform:scaleX(0.8989);transform-origin:0 50%;">F - Diâmetro Furo Parafuso Minifix</span>
<span class="t" style="left:932.3px;top:706.7px;line-height:16px;font-size:12px;color:#000;">5</span>
<div class="a" style="left:928px;top:724.5px;width:66px;height:19.500px;background:#fff;"></div>
<div class="a" style="left:339px;top:744.0px;width:655px;height:1px;background:#a6a6a6;"></div>
<span class="t" style="left:345.2px;top:726.7px;line-height:16px;font-size:12px;color:#0c0c0c;letter-spacing:-0.255px;transform:scaleX(0.9034);transform-origin:0 50%;">G - Distância Furo Parafuso Minifix 15mm</span>
<span class="t" style="left:932.3px;top:726.7px;line-height:16px;font-size:12px;color:#000;">8</span>
<div class="a" style="left:928px;top:744.5px;width:66px;height:19.500px;background:#fff;"></div>
<div class="a" style="left:339px;top:764.0px;width:655px;height:1px;background:#a6a6a6;"></div>
<span class="t" style="left:345.2px;top:746.7px;line-height:16px;font-size:12px;color:#0c0c0c;letter-spacing:-0.227px;transform:scaleX(0.9131);transform-origin:0 50%;">H - Distância Furo Parafuso Minifix 18/25mm</span>
<span class="t" style="left:932.3px;top:746.7px;line-height:16px;font-size:12px;color:#000;">9</span>
<div class="a" style="left:338.500px;top:724.500px;width:650px;height:34px;border:3px solid #d6202b;box-sizing:content-box;"></div>
</body></html>
